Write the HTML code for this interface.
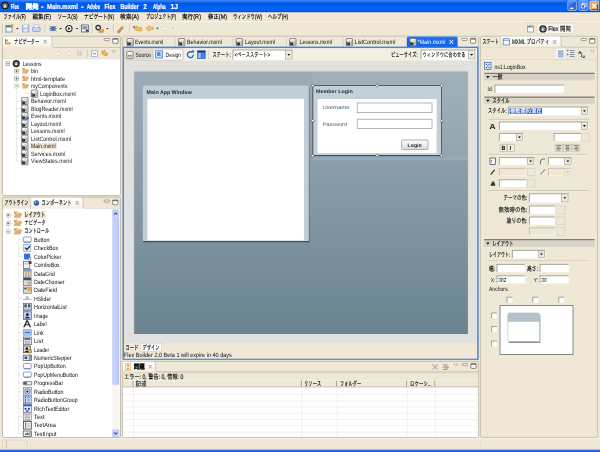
<!DOCTYPE html>
<html lang="ja"><head><meta charset="utf-8"><title>Flex 開発 - Main.mxml - Adobe Flex Builder 2 Alpha 1J</title>
<style>
html,body{margin:0;padding:0;background:#f0e8d7;overflow:hidden}
body{width:600px;height:452px;font-family:"Liberation Sans","IPAGothic","Noto Sans CJK JP",sans-serif;}
svg{display:block;position:absolute;left:0;top:0}
</style></head><body>
<svg width="600" height="452" viewBox="0 0 600 452" font-family='"Liberation Sans","IPAGothic","Noto Sans CJK JP",sans-serif' shape-rendering="auto" text-rendering="geometricPrecision">
<defs>
<filter id="soft" x="-2%" y="-2%" width="104%" height="104%" filterUnits="objectBoundingBox"><feGaussianBlur stdDeviation="0.38"/></filter>
<linearGradient id="gTitle" x1="0" y1="0" x2="0" y2="1">
<stop offset="0" stop-color="#3a8cff"/><stop offset="0.1" stop-color="#2478f8"/><stop offset="0.27" stop-color="#0458e6"/><stop offset="0.6" stop-color="#0460f0"/><stop offset="0.9" stop-color="#0466fa"/><stop offset="0.96" stop-color="#0448c8"/><stop offset="1" stop-color="#0440b8"/></linearGradient>
<linearGradient id="gCanvas" x1="0" y1="0" x2="0" y2="1">
<stop offset="0" stop-color="#9cadb7"/><stop offset="1" stop-color="#6a8391"/></linearGradient>
<linearGradient id="gBtn" x1="0" y1="0" x2="0" y2="1">
<stop offset="0" stop-color="#ffffff"/><stop offset="1" stop-color="#d9d9d9"/></linearGradient>
<linearGradient id="gTab" x1="0" y1="0" x2="0" y2="1">
<stop offset="0" stop-color="#2f7af2"/><stop offset="0.3" stop-color="#1868ec"/><stop offset="1" stop-color="#1262e6"/></linearGradient>
<linearGradient id="gVTab" x1="0" y1="0" x2="0" y2="1"><stop offset="0" stop-color="#ffffff"/><stop offset="0.55" stop-color="#fbf9f3"/><stop offset="1" stop-color="#f3ecdd"/></linearGradient>
<linearGradient id="gScroll" x1="0" y1="0" x2="1" y2="0">
<stop offset="0" stop-color="#c9d6fb"/><stop offset="1" stop-color="#b9c9f8"/></linearGradient>
</defs>
<g filter="url(#soft)">
<rect x="-6.00" y="-6.00" width="612.00" height="464.00" fill="#f0e8d7"/>
<rect x="-6.00" y="0.00" width="612.00" height="12.20" fill="url(#gTitle)"/>
<rect x="-6.00" y="-6.00" width="612.00" height="6.20" fill="#3a8cff"/>
<circle cx="5.00" cy="5.60" r="4.00" fill="#1e1e1e"/>
<circle cx="5.00" cy="5.60" r="2.70" fill="#6d6d6d"/>
<path d="M3.5,7.4 l1.5,-3.6 l1.5,3.6 z" fill="#e8e8e8"/>
<text stroke="#fff" stroke-width="0.2" x="10.80" y="8.69" font-size="7.2" fill="#ffffff" textLength="8.40" lengthAdjust="spacingAndGlyphs" font-weight="bold">Flex</text>
<text stroke="#fff" stroke-width="0.2" x="25.40" y="8.69" font-size="7.2" fill="#ffffff" textLength="13.20" lengthAdjust="spacingAndGlyphs" font-weight="bold">開発</text>
<text stroke="#fff" stroke-width="0.2" x="41.00" y="8.69" font-size="7.2" fill="#ffffff" textLength="2.60" lengthAdjust="spacingAndGlyphs" font-weight="bold">-</text>
<text stroke="#fff" stroke-width="0.2" x="47.00" y="8.69" font-size="7.2" fill="#ffffff" textLength="31.00" lengthAdjust="spacingAndGlyphs" font-weight="bold">Main.mxml</text>
<text stroke="#fff" stroke-width="0.2" x="81.00" y="8.69" font-size="7.2" fill="#ffffff" textLength="2.60" lengthAdjust="spacingAndGlyphs" font-weight="bold">-</text>
<text stroke="#fff" stroke-width="0.2" x="87.00" y="8.69" font-size="7.2" fill="#ffffff" textLength="13.00" lengthAdjust="spacingAndGlyphs" font-weight="bold">Adobe</text>
<text stroke="#fff" stroke-width="0.2" x="104.50" y="8.69" font-size="7.2" fill="#ffffff" textLength="11.00" lengthAdjust="spacingAndGlyphs" font-weight="bold">Flex</text>
<text stroke="#fff" stroke-width="0.2" x="120.50" y="8.69" font-size="7.2" fill="#ffffff" textLength="18.30" lengthAdjust="spacingAndGlyphs" font-weight="bold">Builder</text>
<text stroke="#fff" stroke-width="0.2" x="143.40" y="8.69" font-size="7.2" fill="#ffffff" textLength="3.20" lengthAdjust="spacingAndGlyphs" font-weight="bold">2</text>
<text stroke="#fff" stroke-width="0.2" x="153.00" y="8.69" font-size="7.2" fill="#ffffff" textLength="12.60" lengthAdjust="spacingAndGlyphs" font-weight="bold">Alpha</text>
<text stroke="#fff" stroke-width="0.2" x="170.40" y="8.69" font-size="7.2" fill="#ffffff" textLength="7.60" lengthAdjust="spacingAndGlyphs" font-weight="bold">1J</text>
<rect x="567.80" y="1.00" width="8.90" height="9.40" fill="#2c68e6" stroke="#cfdcf6" stroke-width="0.7" rx="1.6"/>
<path d="M568.4,6 v-3 q0,-1.6 1.6,-1.6 h5 z" fill="#7ea4f2" opacity="0.55"/>
<rect x="579.00" y="1.00" width="8.90" height="9.40" fill="#2c68e6" stroke="#cfdcf6" stroke-width="0.7" rx="1.6"/>
<path d="M579.6,6 v-3 q0,-1.6 1.6,-1.6 h5 z" fill="#7ea4f2" opacity="0.55"/>
<rect x="589.80" y="1.00" width="8.90" height="9.40" fill="#dfa066" stroke="#f3e3cf" stroke-width="0.7" rx="1.6"/>
<line x1="570.00" y1="8.30" x2="573.40" y2="8.30" stroke="#fff" stroke-width="1.3"/>
<rect x="582.60" y="3.20" width="3.60" height="3.20" fill="none" stroke="#fff" stroke-width="0.8"/>
<rect x="581.20" y="4.80" width="3.60" height="3.20" fill="#2c68e6" stroke="#fff" stroke-width="0.8"/>
<line x1="592.20" y1="3.80" x2="596.00" y2="8.00" stroke="#fff" stroke-width="1.3"/>
<line x1="596.00" y1="3.80" x2="592.20" y2="8.00" stroke="#fff" stroke-width="1.3"/>
<path d="M591.5,9.8 h6.2 v-5" fill="none" stroke="#3a2a1a" stroke-width="1.1" opacity="0.8"/>
<text x="3.40" y="18.69" font-size="6.73" fill="#000" textLength="22.40" lengthAdjust="spacingAndGlyphs" stroke="#000" stroke-width="0.14">ファイル(F)</text>
<text x="32.60" y="18.69" font-size="6.73" fill="#000" textLength="18.40" lengthAdjust="spacingAndGlyphs" stroke="#000" stroke-width="0.14">編集(E)</text>
<text x="57.40" y="18.69" font-size="6.73" fill="#000" textLength="20.20" lengthAdjust="spacingAndGlyphs" stroke="#000" stroke-width="0.14">ソース(S)</text>
<text x="84.00" y="18.69" font-size="6.73" fill="#000" textLength="30.00" lengthAdjust="spacingAndGlyphs" stroke="#000" stroke-width="0.14">ナビゲート(N)</text>
<text x="120.00" y="18.69" font-size="6.73" fill="#000" textLength="19.00" lengthAdjust="spacingAndGlyphs" stroke="#000" stroke-width="0.14">検索(A)</text>
<text x="146.00" y="18.69" font-size="6.73" fill="#000" textLength="30.00" lengthAdjust="spacingAndGlyphs" stroke="#000" stroke-width="0.14">プロジェクト(P)</text>
<text x="182.00" y="18.69" font-size="6.73" fill="#000" textLength="19.00" lengthAdjust="spacingAndGlyphs" stroke="#000" stroke-width="0.14">実行(R)</text>
<text x="208.00" y="18.69" font-size="6.73" fill="#000" textLength="19.00" lengthAdjust="spacingAndGlyphs" stroke="#000" stroke-width="0.14">修正(M)</text>
<text x="233.00" y="18.69" font-size="6.73" fill="#000" textLength="29.00" lengthAdjust="spacingAndGlyphs" stroke="#000" stroke-width="0.14">ウィンドウ(W)</text>
<text x="268.00" y="18.69" font-size="6.73" fill="#000" textLength="20.00" lengthAdjust="spacingAndGlyphs" stroke="#000" stroke-width="0.14">ヘルプ(H)</text>
<line x1="0.00" y1="20.70" x2="600.00" y2="20.70" stroke="#e2dbc7" stroke-width="0.6"/>
<line x1="0.00" y1="21.40" x2="600.00" y2="21.40" stroke="#ffffff" stroke-width="0.8" opacity="0.85"/>
<line x1="2.60" y1="24.00" x2="2.60" y2="33.00" stroke="#b9b5a4" stroke-width="0.8"/>
<line x1="3.40" y1="24.00" x2="3.40" y2="33.00" stroke="#fff" stroke-width="0.6"/>
<rect x="6.00" y="25.60" width="6.00" height="6.40" fill="#fbfbfb" stroke="#5a6f95" stroke-width="0.7"/>
<rect x="6.00" y="25.60" width="6.00" height="1.80" fill="#4f78c9"/>
<path d="M10.8,24 l1.2,0.9 l1.2,-0.9 l-0.4,1.4 l1,0.9 h-1.3 l-0.5,1.3 l-0.5,-1.3 h-1.3 l1,-0.9z" fill="#eeb040" stroke="#c88a28" stroke-width="0.3"/>
<path d="M16.2,28.0 h2.4 l-1.2,1.5 z" fill="#222"/>
<rect x="22.40" y="25.00" width="6.60" height="7.00" fill="#aec3e6" stroke="#8aa4d2" stroke-width="0.6"/>
<rect x="23.40" y="24.80" width="4.20" height="2.80" fill="#eef3fb"/>
<rect x="23.60" y="29.00" width="3.80" height="3.00" fill="#d7e1f3"/>
<rect x="32.60" y="27.20" width="7.60" height="4.40" fill="#c5d5ef" stroke="#7593c8" stroke-width="0.7" rx="0.8"/>
<rect x="34.00" y="24.80" width="4.80" height="2.60" fill="#fafcff" stroke="#8ba3d0" stroke-width="0.5"/>
<line x1="45.20" y1="24.00" x2="45.20" y2="33.00" stroke="#b5b19f" stroke-width="0.7"/>
<line x1="45.90" y1="24.00" x2="45.90" y2="33.00" stroke="#fff" stroke-width="0.6"/>
<circle cx="53.00" cy="28.60" r="2.70" fill="#6e8cb8"/>
<circle cx="53.00" cy="28.60" r="1.30" fill="#2c4064"/>
<line x1="53.00" y1="28.60" x2="49.60" y2="26.00" stroke="#5f7aa6" stroke-width="0.8"/>
<line x1="53.00" y1="28.60" x2="56.40" y2="26.00" stroke="#5f7aa6" stroke-width="0.8"/>
<line x1="53.00" y1="28.60" x2="49.20" y2="28.60" stroke="#5f7aa6" stroke-width="0.8"/>
<line x1="53.00" y1="28.60" x2="56.80" y2="28.60" stroke="#5f7aa6" stroke-width="0.8"/>
<line x1="53.00" y1="28.60" x2="49.60" y2="31.20" stroke="#5f7aa6" stroke-width="0.8"/>
<line x1="53.00" y1="28.60" x2="56.40" y2="31.20" stroke="#5f7aa6" stroke-width="0.8"/>
<path d="M59.4,28.0 h2.4 l-1.2,1.5 z" fill="#222"/>
<circle cx="69.00" cy="28.60" r="3.60" fill="#262626"/>
<circle cx="69.00" cy="28.60" r="2.50" fill="#fff"/>
<path d="M68.1,27 l2.5,1.6 l-2.5,1.6 z" fill="#262626"/>
<path d="M75.8,28.0 h2.4 l-1.2,1.5 z" fill="#222"/>
<rect x="81.40" y="25.00" width="7.20" height="7.00" fill="#f6f6f6" stroke="#4b4b4b" stroke-width="0.7"/>
<rect x="82.40" y="26.20" width="5.00" height="3.20" fill="#7f97c8"/>
<path d="M85,31.6 l2,-2.6 l2,2.6 z" fill="#333"/>
<line x1="92.40" y1="24.00" x2="92.40" y2="33.00" stroke="#b5b19f" stroke-width="0.7"/>
<line x1="93.10" y1="24.00" x2="93.10" y2="33.00" stroke="#fff" stroke-width="0.6"/>
<circle cx="98.20" cy="27.60" r="2.80" fill="#2a2a2a"/>
<circle cx="98.20" cy="27.60" r="1.60" fill="#d8d8d8"/>
<rect x="99.00" y="29.60" width="4.40" height="2.60" fill="#f0a030" stroke="#a96a18" stroke-width="0.4"/>
<path d="M106.2,28.0 h2.4 l-1.2,1.5 z" fill="#222"/>
<line x1="113.80" y1="24.00" x2="113.80" y2="33.00" stroke="#b5b19f" stroke-width="0.7"/>
<line x1="114.50" y1="24.00" x2="114.50" y2="33.00" stroke="#fff" stroke-width="0.6"/>
<path d="M117.2,32 l4.6,-5.6 l1.6,1.3 l-4.6,5.6 z" fill="#c98f50" stroke="#8d6232" stroke-width="0.4"/>
<path d="M121.8,26.4 l1.4,-1.8 l1.6,1.3 l-1.4,1.8z" fill="#f2d9a0"/>
<line x1="130.00" y1="24.00" x2="130.00" y2="33.00" stroke="#b5b19f" stroke-width="0.7"/>
<line x1="130.70" y1="24.00" x2="130.70" y2="33.00" stroke="#fff" stroke-width="0.6"/>
<path d="M134.2,28.4 l3,-2.6 v1.5 h3.2 q1.6,0 1.6,1.6 v1 q0,0.9 -1,0.9 h-3.8 v0.2 z" fill="#f2bf5c" stroke="#c08a2a" stroke-width="0.5"/>
<path d="M134,25.4 l0.5,1 l1,0.1 l-0.8,0.7 l0.2,1 l-0.9,-0.5 l-0.9,0.5 l0.2,-1 l-0.8,-0.7 l1,-0.1z" fill="#3a6ad0"/>
<path d="M146,28.4 l3.2,-2.7 v1.5 h4 v2.4 h-4 v1.5 z" fill="#f6c666" stroke="#c08a2a" stroke-width="0.5"/>
<path d="M156.20000000000002,27.799999999999997 h2.4 l-1.2,1.5 z" fill="#222"/>
<path d="M168.4,28.4 l-3.2,-2.7 v1.5 h-3.8 v2.4 h3.8 v1.5 z" fill="#f8f6ee" stroke="#d2cdb9" stroke-width="0.5"/>
<path d="M171.8,27.8 h2.4 l-1.2,1.5z" fill="#bdb9a8"/>
<rect x="527.60" y="26.00" width="5.80" height="6.00" fill="#fdfdfd" stroke="#7b7b7b" stroke-width="0.6"/>
<rect x="527.60" y="26.00" width="5.80" height="1.40" fill="#5578c4"/>
<path d="M532.2,24.6 l0.6,1.1 l1.2,0.2 l-0.9,0.8 l0.2,1.2 l-1.1,-0.6 l-1.1,0.6 l0.2,-1.2 l-0.9,-0.8 l1.2,-0.2z" fill="#e9a93f"/>
<rect x="537.00" y="23.20" width="37.00" height="10.40" fill="#f8f5ee" stroke="#d5cfbc" stroke-width="0.5" rx="1.2"/>
<line x1="525.00" y1="22.80" x2="575.00" y2="22.80" stroke="#d9d3c0" stroke-width="0.5"/>
<circle cx="543.00" cy="28.90" r="3.70" fill="#222"/>
<circle cx="543.00" cy="28.90" r="2.50" fill="#7a7a7a"/>
<path d="M541.7,30.6 l1.3,-3.3 l1.3,3.3z" fill="#e6e6e6"/>
<text x="548.20" y="30.99" font-size="6.73" fill="#111" textLength="22.80" lengthAdjust="spacingAndGlyphs" stroke="#111" stroke-width="0.14">Flex 開発</text>
<rect x="2.60" y="36.20" width="117.80" height="159.20" fill="#f0e8d7" stroke="#aca899" stroke-width="0.7" rx="1.2"/>
<path d="M3.0,47.5 V38.0 q0,-1.4 1.4,-1.4 H50.4 q1.6,0 1.6,1.6 V45.5 q0,2 2,2 z" fill="url(#gVTab)"/>
<path d="M50.4,36.6 q1.6,0 1.6,1.6 V45.5 q0,2 2,2 H120.0" fill="none" stroke="#aca899" stroke-width="0.55"/>
<rect x="5.20" y="39.60" width="2.80" height="2.00" fill="#e9a23c"/>
<rect x="7.20" y="42.40" width="3.40" height="2.20" fill="#e9a23c"/>
<line x1="5.60" y1="39.00" x2="5.60" y2="44.00" stroke="#4a6fb5" stroke-width="0.8"/>
<line x1="5.60" y1="43.60" x2="7.40" y2="43.60" stroke="#4a6fb5" stroke-width="0.7"/>
<text x="14.00" y="44.09" font-size="6.73" fill="#111" textLength="25.30" lengthAdjust="spacingAndGlyphs" stroke="#111" stroke-width="0.14">ナビゲーター</text>
<line x1="43.60" y1="39.80" x2="46.80" y2="43.60" stroke="#9b9b9b" stroke-width="0.6"/>
<line x1="46.80" y1="39.80" x2="43.60" y2="43.60" stroke="#9b9b9b" stroke-width="0.6"/>
<line x1="43.60" y1="40.60" x2="46.80" y2="40.60" stroke="#9b9b9b" stroke-width="0.5"/>
<line x1="43.60" y1="42.80" x2="46.80" y2="42.80" stroke="#9b9b9b" stroke-width="0.5"/>
<rect x="104.30" y="38.50" width="5.20" height="2.10" fill="#fff" stroke="#7d796b" stroke-width="0.7" rx="0.6"/>
<rect x="112.80" y="38.50" width="5.20" height="4.80" fill="#fff" stroke="#6f6b5e" stroke-width="0.8" rx="0.5"/>
<line x1="112.80" y1="39.10" x2="118.00" y2="39.10" stroke="#6f6b5e" stroke-width="1.1"/>
<path d="M55.4,53.4 l3,-2.6 v1.5 h3.2 v2.2 h-3.2 v1.5 z" fill="#faf8f2" stroke="#c2beb0" stroke-width="0.4"/>
<path d="M71.8,53.4 l-3,-2.6 v1.5 h-3.2 v2.2 h3.2 v1.5 z" fill="#faf8f2" stroke="#c2beb0" stroke-width="0.4"/>
<rect x="77.40" y="51.00" width="4.20" height="4.40" fill="#dddacb" stroke="#c9c5b3" stroke-width="0.4"/>
<path d="M80,52 l2.4,2 l-2.4,2z" fill="#d0ccbb"/>
<line x1="87.40" y1="49.60" x2="87.40" y2="57.40" stroke="#bdb9a8" stroke-width="0.6"/>
<rect x="91.60" y="50.80" width="5.80" height="5.80" fill="#fdfdfd" stroke="#86a0d4" stroke-width="0.7"/>
<line x1="93.00" y1="53.70" x2="96.00" y2="53.70" stroke="#4a6aa8" stroke-width="0.8"/>
<path d="M101.6,51.6 l3,-1.4 l1,2.2 l2.4,1 l-1.2,2.6 l-2.6,-0.8 l-1.6,-1.2 z" fill="#f0b24a" stroke="#c4862a" stroke-width="0.5"/>
<path d="M111.6,50.6 h4 l-2,2.4 z" fill="#f6f3ea" stroke="#9b9786" stroke-width="0.5"/>
<rect x="3.10" y="58.80" width="116.80" height="136.20" fill="#ffffff"/>
<line x1="3.10" y1="58.80" x2="119.90" y2="58.80" stroke="#d9d5c4" stroke-width="0.5"/>
<line x1="16.6" y1="66" x2="16.6" y2="161.4" stroke="#b5b5b5" stroke-width="0.5" stroke-dasharray="0.5,0.5"/>
<rect x="5.90" y="61.80" width="3.80" height="3.80" fill="#fff" stroke="#8a8a8a" stroke-width="0.6"/>
<line x1="6.70" y1="63.70" x2="8.90" y2="63.70" stroke="#333" stroke-width="0.6"/>
<circle cx="16.20" cy="63.60" r="3.60" fill="#2a2a2a"/>
<circle cx="16.20" cy="63.60" r="2.20" fill="#777"/>
<path d="M14.8,65 l1.4,-3.2 l1.4,3.2 z" fill="#ddd"/>
<text x="22.70" y="65.83" font-size="6.2" fill="#1a1a1a" textLength="18.90" lengthAdjust="spacingAndGlyphs">Lessons</text>
<line x1="18.6" y1="71.1" x2="22" y2="71.1" stroke="#b5b5b5" stroke-width="0.5" stroke-dasharray="0.5,0.5"/>
<rect x="14.70" y="69.20" width="3.80" height="3.80" fill="#fff" stroke="#9a9a9a" stroke-width="0.6"/>
<line x1="15.50" y1="71.10" x2="17.70" y2="71.10" stroke="#333" stroke-width="0.6"/>
<line x1="16.60" y1="70.00" x2="16.60" y2="72.20" stroke="#333" stroke-width="0.6"/>
<path d="M22.2,68.3 h2.5 l0.8,0.9 h2.7 v1.4 h-6z" fill="#d9a166"/>
<path d="M21.9,73.5 l1.5,-3.5 h5.7 l-1.7,3.5z" fill="#e4ad74"/>
<line x1="23.90" y1="69.70" x2="26.60" y2="69.70" stroke="#fbe9cf" stroke-width="0.6"/>
<text x="31.00" y="73.33" font-size="6.2" fill="#1a1a1a" textLength="7.00" lengthAdjust="spacingAndGlyphs">bin</text>
<line x1="18.6" y1="78.6" x2="22" y2="78.6" stroke="#b5b5b5" stroke-width="0.5" stroke-dasharray="0.5,0.5"/>
<rect x="14.70" y="76.70" width="3.80" height="3.80" fill="#fff" stroke="#9a9a9a" stroke-width="0.6"/>
<line x1="15.50" y1="78.60" x2="17.70" y2="78.60" stroke="#333" stroke-width="0.6"/>
<line x1="16.60" y1="77.50" x2="16.60" y2="79.70" stroke="#333" stroke-width="0.6"/>
<path d="M22.2,75.8 h2.5 l0.8,0.9 h2.7 v1.4 h-6z" fill="#d9a166"/>
<path d="M21.9,81.0 l1.5,-3.5 h5.7 l-1.7,3.5z" fill="#e4ad74"/>
<line x1="23.90" y1="77.20" x2="26.60" y2="77.20" stroke="#fbe9cf" stroke-width="0.6"/>
<text x="31.00" y="80.83" font-size="6.2" fill="#1a1a1a" textLength="34.00" lengthAdjust="spacingAndGlyphs">html-template</text>
<line x1="18.6" y1="86.1" x2="22" y2="86.1" stroke="#b5b5b5" stroke-width="0.5" stroke-dasharray="0.5,0.5"/>
<rect x="14.70" y="84.20" width="3.80" height="3.80" fill="#fff" stroke="#c2c2c2" stroke-width="0.6"/>
<line x1="15.50" y1="86.10" x2="17.70" y2="86.10" stroke="#333" stroke-width="0.6"/>
<path d="M22.2,83.3 h2.5 l0.8,0.9 h2.7 v1.4 h-6z" fill="#d9a166"/>
<path d="M21.9,88.5 l1.5,-3.5 h5.7 l-1.7,3.5z" fill="#e4ad74"/>
<line x1="23.90" y1="84.70" x2="26.60" y2="84.70" stroke="#fbe9cf" stroke-width="0.6"/>
<text x="31.00" y="88.33" font-size="6.2" fill="#1a1a1a" textLength="36.30" lengthAdjust="spacingAndGlyphs">myComponents</text>
<line x1="25.6" y1="89.6" x2="25.6" y2="93.4" stroke="#b5b5b5" stroke-width="0.5" stroke-dasharray="0.5,0.5"/>
<line x1="25.6" y1="93.4" x2="31" y2="93.4" stroke="#b5b5b5" stroke-width="0.5" stroke-dasharray="0.5,0.5"/>
<rect x="31.30" y="90.00" width="6.40" height="7.20" fill="#f1f1f1" stroke="#4f4f4f" stroke-width="0.65" rx="0.6"/>
<rect x="31.60" y="93.00" width="0.90" height="3.90" fill="#3a3a3a"/>
<rect x="32.40" y="93.80" width="2.70" height="2.80" fill="#333333"/>
<rect x="35.40" y="92.00" width="1.80" height="4.50" fill="#b0b0b0"/>
<rect x="33.00" y="90.80" width="3.10" height="2.00" fill="#ffffff"/>
<line x1="32.90" y1="93.30" x2="35.70" y2="91.40" stroke="#777" stroke-width="0.45"/>
<text x="40.00" y="95.63" font-size="6.2" fill="#1a1a1a" textLength="35.70" lengthAdjust="spacingAndGlyphs">LoginBox.mxml</text>
<line x1="16.6" y1="101" x2="21" y2="101" stroke="#b5b5b5" stroke-width="0.5" stroke-dasharray="0.5,0.5"/>
<rect x="21.60" y="97.60" width="6.40" height="7.20" fill="#f1f1f1" stroke="#4f4f4f" stroke-width="0.65" rx="0.6"/>
<rect x="21.90" y="100.60" width="0.90" height="3.90" fill="#3a3a3a"/>
<rect x="22.70" y="101.40" width="2.70" height="2.80" fill="#333333"/>
<rect x="25.70" y="99.60" width="1.80" height="4.50" fill="#b0b0b0"/>
<rect x="23.30" y="98.40" width="3.10" height="2.00" fill="#ffffff"/>
<line x1="23.20" y1="100.90" x2="26.00" y2="99.00" stroke="#777" stroke-width="0.45"/>
<text x="31.00" y="103.23" font-size="6.2" fill="#1a1a1a" textLength="35.00" lengthAdjust="spacingAndGlyphs">Behavior.mxml</text>
<line x1="16.6" y1="108.5" x2="21" y2="108.5" stroke="#b5b5b5" stroke-width="0.5" stroke-dasharray="0.5,0.5"/>
<rect x="21.60" y="105.10" width="6.40" height="7.20" fill="#f1f1f1" stroke="#4f4f4f" stroke-width="0.65" rx="0.6"/>
<rect x="21.90" y="108.10" width="0.90" height="3.90" fill="#3a3a3a"/>
<rect x="22.70" y="108.90" width="2.70" height="2.80" fill="#333333"/>
<rect x="25.70" y="107.10" width="1.80" height="4.50" fill="#b0b0b0"/>
<rect x="23.30" y="105.90" width="3.10" height="2.00" fill="#ffffff"/>
<line x1="23.20" y1="108.40" x2="26.00" y2="106.50" stroke="#777" stroke-width="0.45"/>
<text x="31.00" y="110.73" font-size="6.2" fill="#1a1a1a" textLength="41.60" lengthAdjust="spacingAndGlyphs">BlogReader.mxml</text>
<line x1="16.6" y1="116.0" x2="21" y2="116.0" stroke="#b5b5b5" stroke-width="0.5" stroke-dasharray="0.5,0.5"/>
<rect x="21.60" y="112.60" width="6.40" height="7.20" fill="#f1f1f1" stroke="#4f4f4f" stroke-width="0.65" rx="0.6"/>
<rect x="21.90" y="115.60" width="0.90" height="3.90" fill="#3a3a3a"/>
<rect x="22.70" y="116.40" width="2.70" height="2.80" fill="#333333"/>
<rect x="25.70" y="114.60" width="1.80" height="4.50" fill="#b0b0b0"/>
<rect x="23.30" y="113.40" width="3.10" height="2.00" fill="#ffffff"/>
<line x1="23.20" y1="115.90" x2="26.00" y2="114.00" stroke="#777" stroke-width="0.45"/>
<text x="31.00" y="118.23" font-size="6.2" fill="#1a1a1a" textLength="30.20" lengthAdjust="spacingAndGlyphs">Events.mxml</text>
<line x1="16.6" y1="123.5" x2="21" y2="123.5" stroke="#b5b5b5" stroke-width="0.5" stroke-dasharray="0.5,0.5"/>
<rect x="21.60" y="120.10" width="6.40" height="7.20" fill="#f1f1f1" stroke="#4f4f4f" stroke-width="0.65" rx="0.6"/>
<rect x="21.90" y="123.10" width="0.90" height="3.90" fill="#3a3a3a"/>
<rect x="22.70" y="123.90" width="2.70" height="2.80" fill="#333333"/>
<rect x="25.70" y="122.10" width="1.80" height="4.50" fill="#b0b0b0"/>
<rect x="23.30" y="120.90" width="3.10" height="2.00" fill="#ffffff"/>
<line x1="23.20" y1="123.40" x2="26.00" y2="121.50" stroke="#777" stroke-width="0.45"/>
<text x="31.00" y="125.73" font-size="6.2" fill="#1a1a1a" textLength="30.00" lengthAdjust="spacingAndGlyphs">Layout.mxml</text>
<line x1="16.6" y1="131.0" x2="21" y2="131.0" stroke="#b5b5b5" stroke-width="0.5" stroke-dasharray="0.5,0.5"/>
<rect x="21.60" y="127.60" width="6.40" height="7.20" fill="#f1f1f1" stroke="#4f4f4f" stroke-width="0.65" rx="0.6"/>
<rect x="21.90" y="130.60" width="0.90" height="3.90" fill="#3a3a3a"/>
<rect x="22.70" y="131.40" width="2.70" height="2.80" fill="#333333"/>
<rect x="25.70" y="129.60" width="1.80" height="4.50" fill="#b0b0b0"/>
<rect x="23.30" y="128.40" width="3.10" height="2.00" fill="#ffffff"/>
<line x1="23.20" y1="130.90" x2="26.00" y2="129.00" stroke="#777" stroke-width="0.45"/>
<text x="31.00" y="133.23" font-size="6.2" fill="#1a1a1a" textLength="33.60" lengthAdjust="spacingAndGlyphs">Lessons.mxml</text>
<line x1="16.6" y1="138.5" x2="21" y2="138.5" stroke="#b5b5b5" stroke-width="0.5" stroke-dasharray="0.5,0.5"/>
<rect x="21.60" y="135.10" width="6.40" height="7.20" fill="#f1f1f1" stroke="#4f4f4f" stroke-width="0.65" rx="0.6"/>
<rect x="21.90" y="138.10" width="0.90" height="3.90" fill="#3a3a3a"/>
<rect x="22.70" y="138.90" width="2.70" height="2.80" fill="#333333"/>
<rect x="25.70" y="137.10" width="1.80" height="4.50" fill="#b0b0b0"/>
<rect x="23.30" y="135.90" width="3.10" height="2.00" fill="#ffffff"/>
<line x1="23.20" y1="138.40" x2="26.00" y2="136.50" stroke="#777" stroke-width="0.45"/>
<text x="31.00" y="140.73" font-size="6.2" fill="#1a1a1a" textLength="40.20" lengthAdjust="spacingAndGlyphs">ListControl.mxml</text>
<line x1="16.6" y1="146.0" x2="21" y2="146.0" stroke="#b5b5b5" stroke-width="0.5" stroke-dasharray="0.5,0.5"/>
<rect x="30.20" y="142.70" width="26.80" height="6.80" fill="#f0e8d7"/>
<rect x="21.60" y="142.60" width="6.40" height="7.20" fill="#f1f1f1" stroke="#4f4f4f" stroke-width="0.65" rx="0.6"/>
<rect x="21.90" y="145.60" width="0.90" height="3.90" fill="#3a3a3a"/>
<rect x="22.70" y="146.40" width="2.70" height="2.80" fill="#333333"/>
<rect x="25.70" y="144.60" width="1.80" height="4.50" fill="#b0b0b0"/>
<rect x="23.30" y="143.40" width="3.10" height="2.00" fill="#ffffff"/>
<line x1="23.20" y1="145.90" x2="26.00" y2="144.00" stroke="#777" stroke-width="0.45"/>
<text x="31.00" y="148.23" font-size="6.2" fill="#1a1a1a" textLength="24.60" lengthAdjust="spacingAndGlyphs">Main.mxml</text>
<line x1="16.6" y1="153.5" x2="21" y2="153.5" stroke="#b5b5b5" stroke-width="0.5" stroke-dasharray="0.5,0.5"/>
<rect x="21.60" y="150.10" width="6.40" height="7.20" fill="#f1f1f1" stroke="#4f4f4f" stroke-width="0.65" rx="0.6"/>
<rect x="21.90" y="153.10" width="0.90" height="3.90" fill="#3a3a3a"/>
<rect x="22.70" y="153.90" width="2.70" height="2.80" fill="#333333"/>
<rect x="25.70" y="152.10" width="1.80" height="4.50" fill="#b0b0b0"/>
<rect x="23.30" y="150.90" width="3.10" height="2.00" fill="#ffffff"/>
<line x1="23.20" y1="153.40" x2="26.00" y2="151.50" stroke="#777" stroke-width="0.45"/>
<text x="31.00" y="155.73" font-size="6.2" fill="#1a1a1a" textLength="34.40" lengthAdjust="spacingAndGlyphs">Services.mxml</text>
<line x1="16.6" y1="161.0" x2="21" y2="161.0" stroke="#b5b5b5" stroke-width="0.5" stroke-dasharray="0.5,0.5"/>
<rect x="21.60" y="157.60" width="6.40" height="7.20" fill="#f1f1f1" stroke="#4f4f4f" stroke-width="0.65" rx="0.6"/>
<rect x="21.90" y="160.60" width="0.90" height="3.90" fill="#3a3a3a"/>
<rect x="22.70" y="161.40" width="2.70" height="2.80" fill="#333333"/>
<rect x="25.70" y="159.60" width="1.80" height="4.50" fill="#b0b0b0"/>
<rect x="23.30" y="158.40" width="3.10" height="2.00" fill="#ffffff"/>
<line x1="23.20" y1="160.90" x2="26.00" y2="159.00" stroke="#777" stroke-width="0.45"/>
<text x="31.00" y="163.23" font-size="6.2" fill="#1a1a1a" textLength="41.00" lengthAdjust="spacingAndGlyphs">ViewStates.mxml</text>
<rect x="26.30" y="117.20" width="2.50" height="2.00" fill="#1f5fe0"/>
<rect x="2.60" y="197.20" width="117.80" height="240.20" fill="#f0e8d7" stroke="#aca899" stroke-width="0.7" rx="1.2"/>
<text x="4.60" y="205.29" font-size="6.73" fill="#111" textLength="24.00" lengthAdjust="spacingAndGlyphs" stroke="#111" stroke-width="0.14">アウトライン</text>
<path d="M30.6,208.6 V199.20000000000002 q0,-1.4 1.4,-1.4 H81.4 q1.6,0 1.6,1.6 V206.6 q0,2 2,2 z" fill="url(#gVTab)"/>
<path d="M81.4,197.8 q1.6,0 1.6,1.6 V206.6 q0,2 2,2 H120.0" fill="none" stroke="#aca899" stroke-width="0.55"/>
<line x1="30.60" y1="198.80" x2="30.60" y2="208.60" stroke="#aca899" stroke-width="0.5"/>
<circle cx="36.40" cy="203.00" r="2.70" fill="#3b5fa8"/>
<circle cx="35.60" cy="202.20" r="1.00" fill="#9bb6e6"/>
<text x="41.40" y="205.29" font-size="6.73" fill="#111" textLength="30.20" lengthAdjust="spacingAndGlyphs" stroke="#111" stroke-width="0.14">コンポーネント</text>
<line x1="75.60" y1="201.00" x2="78.80" y2="204.80" stroke="#9b9b9b" stroke-width="0.6"/>
<line x1="78.80" y1="201.00" x2="75.60" y2="204.80" stroke="#9b9b9b" stroke-width="0.6"/>
<line x1="75.60" y1="201.80" x2="78.80" y2="201.80" stroke="#9b9b9b" stroke-width="0.5"/>
<line x1="75.60" y1="204.00" x2="78.80" y2="204.00" stroke="#9b9b9b" stroke-width="0.5"/>
<rect x="104.20" y="200.00" width="5.20" height="2.10" fill="#fff" stroke="#7d796b" stroke-width="0.7" rx="0.6"/>
<rect x="112.70" y="200.00" width="5.20" height="4.80" fill="#fff" stroke="#6f6b5e" stroke-width="0.8" rx="0.5"/>
<line x1="112.70" y1="200.60" x2="117.90" y2="200.60" stroke="#6f6b5e" stroke-width="1.1"/>
<rect x="3.10" y="208.60" width="116.80" height="228.40" fill="#ffffff"/>
<rect x="112.20" y="208.80" width="7.00" height="228.20" fill="#f7f6f3"/>
<rect x="112.40" y="218.00" width="6.60" height="166.60" fill="url(#gScroll)" stroke="#b5c6f4" stroke-width="0.4" rx="0.8"/>
<rect x="112.40" y="209.80" width="6.60" height="7.80" fill="#c6d4fb" stroke="#aebff2" stroke-width="0.4" rx="1"/>
<path d="M114,214.6 l1.7,-1.9 l1.7,1.9" fill="none" stroke="#3d568c" stroke-width="1.1"/>
<rect x="112.40" y="429.80" width="6.60" height="7.20" fill="#c6d4fb" stroke="#aebff2" stroke-width="0.4" rx="1"/>
<path d="M114,432.4 l1.7,1.9 l1.7,-1.9" fill="none" stroke="#3d568c" stroke-width="1.1"/>
<line x1="8.2" y1="217" x2="8.2" y2="231" stroke="#b5b5b5" stroke-width="0.5" stroke-dasharray="0.5,0.5"/>
<rect x="23.60" y="211.00" width="22.40" height="7.40" fill="#f0e8d7"/>
<rect x="6.30" y="213.30" width="3.80" height="3.80" fill="#fff" stroke="#b8b8b8" stroke-width="0.6"/>
<line x1="7.10" y1="215.20" x2="9.30" y2="215.20" stroke="#333" stroke-width="0.6"/>
<line x1="8.20" y1="214.10" x2="8.20" y2="216.30" stroke="#333" stroke-width="0.6"/>
<line x1="10.2" y1="215.2" x2="14" y2="215.2" stroke="#b5b5b5" stroke-width="0.5" stroke-dasharray="0.5,0.5"/>
<g transform="translate(13.8,211.00) scale(1.2) translate(-13.8,-211.00)">
<path d="M14.0,211.5 h2.5 l0.8,0.9 h2.7 v1.4 h-6z" fill="#d9a166"/>
<path d="M13.700000000000001,216.7 l1.5,-3.5 h5.7 l-1.7,3.5z" fill="#e4ad74"/>
<line x1="15.70" y1="212.90" x2="18.40" y2="212.90" stroke="#fbe9cf" stroke-width="0.6"/>
</g>
<text x="24.60" y="216.89" font-size="6.73" fill="#111" textLength="20.40" lengthAdjust="spacingAndGlyphs" stroke="#111" stroke-width="0.14">レイアウト</text>
<rect x="6.30" y="221.50" width="3.80" height="3.80" fill="#fff" stroke="#b8b8b8" stroke-width="0.6"/>
<line x1="7.10" y1="223.40" x2="9.30" y2="223.40" stroke="#333" stroke-width="0.6"/>
<line x1="8.20" y1="222.30" x2="8.20" y2="224.50" stroke="#333" stroke-width="0.6"/>
<line x1="10.2" y1="223.4" x2="14" y2="223.4" stroke="#b5b5b5" stroke-width="0.5" stroke-dasharray="0.5,0.5"/>
<g transform="translate(13.8,219.20) scale(1.2) translate(-13.8,-219.20)">
<path d="M14.0,219.70000000000002 h2.5 l0.8,0.9 h2.7 v1.4 h-6z" fill="#d9a166"/>
<path d="M13.700000000000001,224.9 l1.5,-3.5 h5.7 l-1.7,3.5z" fill="#e4ad74"/>
<line x1="15.70" y1="221.10" x2="18.40" y2="221.10" stroke="#fbe9cf" stroke-width="0.6"/>
</g>
<text x="24.60" y="225.09" font-size="6.73" fill="#111" textLength="21.00" lengthAdjust="spacingAndGlyphs" stroke="#111" stroke-width="0.14">ナビゲータ</text>
<rect x="6.30" y="229.90" width="3.80" height="3.80" fill="#fff" stroke="#b8b8b8" stroke-width="0.6"/>
<line x1="7.10" y1="231.80" x2="9.30" y2="231.80" stroke="#333" stroke-width="0.6"/>
<line x1="10.2" y1="231.79999999999998" x2="14" y2="231.79999999999998" stroke="#b5b5b5" stroke-width="0.5" stroke-dasharray="0.5,0.5"/>
<g transform="translate(13.8,227.60) scale(1.2) translate(-13.8,-227.60)">
<path d="M14.0,228.1 h2.5 l0.8,0.9 h2.7 v1.4 h-6z" fill="#d9a166"/>
<path d="M13.700000000000001,233.29999999999998 l1.5,-3.5 h5.7 l-1.7,3.5z" fill="#e4ad74"/>
<line x1="15.70" y1="229.50" x2="18.40" y2="229.50" stroke="#fbe9cf" stroke-width="0.6"/>
</g>
<text x="24.60" y="233.49" font-size="6.73" fill="#111" textLength="24.40" lengthAdjust="spacingAndGlyphs" stroke="#111" stroke-width="0.14">コントロール</text>
<line x1="18.8" y1="235" x2="18.8" y2="434" stroke="#b5b5b5" stroke-width="0.5" stroke-dasharray="0.5,0.5"/>
<line x1="18.8" y1="239.6" x2="23" y2="239.6" stroke="#b5b5b5" stroke-width="0.5" stroke-dasharray="0.5,0.5"/>
<g transform="translate(23.4,235.80) scale(1.13) translate(-23.4,-235.80)">
<rect x="23.40" y="236.80" width="7.00" height="4.60" fill="#f7f9fd" stroke="#6f86b4" stroke-width="0.65" rx="1"/>
<line x1="24.00" y1="241.50" x2="29.80" y2="241.50" stroke="#4a5f8c" stroke-width="0.5"/>
</g>
<text x="34.00" y="241.83" font-size="6.2" fill="#111" textLength="15.60" lengthAdjust="spacingAndGlyphs">Button</text>
<line x1="18.8" y1="248.0375" x2="23" y2="248.0375" stroke="#b5b5b5" stroke-width="0.5" stroke-dasharray="0.5,0.5"/>
<g transform="translate(23.4,244.24) scale(1.13) translate(-23.4,-244.24)">
<rect x="23.70" y="244.44" width="6.20" height="6.20" fill="#e2ecfc" stroke="#7f9ad0" stroke-width="0.6"/>
<path d="M24.799999999999997,247.23749999999998 l1.7,1.8 l2.6,-3.2" fill="none" stroke="#1b1b1b" stroke-width="1.1"/>
</g>
<text x="34.00" y="250.27" font-size="6.2" fill="#111" textLength="24.20" lengthAdjust="spacingAndGlyphs">CheckBox</text>
<line x1="18.8" y1="256.475" x2="23" y2="256.475" stroke="#b5b5b5" stroke-width="0.5" stroke-dasharray="0.5,0.5"/>
<g transform="translate(23.4,252.68) scale(1.13) translate(-23.4,-252.68)">
<rect x="24.00" y="253.48" width="5.40" height="5.20" fill="#2f6ee6"/>
<rect x="27.80" y="256.88" width="2.20" height="2.20" fill="#f5f5f5" stroke="#555" stroke-width="0.4"/>
</g>
<text x="34.00" y="258.71" font-size="6.2" fill="#111" textLength="27.20" lengthAdjust="spacingAndGlyphs">ColorPicker</text>
<line x1="18.8" y1="264.9125" x2="23" y2="264.9125" stroke="#b5b5b5" stroke-width="0.5" stroke-dasharray="0.5,0.5"/>
<g transform="translate(23.4,261.11) scale(1.13) translate(-23.4,-261.11)">
<rect x="23.40" y="261.51" width="5.60" height="6.20" fill="#f3f3f3" stroke="#555" stroke-width="0.6"/>
<rect x="28.00" y="261.11" width="2.60" height="2.60" fill="#444"/>
<line x1="24.40" y1="263.51" x2="27.40" y2="263.51" stroke="#777" stroke-width="0.5"/>
</g>
<text x="34.00" y="267.14" font-size="6.2" fill="#111" textLength="25.60" lengthAdjust="spacingAndGlyphs">ComboBox</text>
<line x1="18.8" y1="273.35" x2="23" y2="273.35" stroke="#b5b5b5" stroke-width="0.5" stroke-dasharray="0.5,0.5"/>
<g transform="translate(23.4,269.55) scale(1.13) translate(-23.4,-269.55)">
<rect x="23.40" y="269.55" width="6.80" height="6.80" fill="#e8d7b8" stroke="#6a6a6a" stroke-width="0.6"/>
<line x1="25.70" y1="269.55" x2="25.70" y2="276.35" stroke="#6a6a6a" stroke-width="0.5"/>
<line x1="28.00" y1="269.55" x2="28.00" y2="276.35" stroke="#6a6a6a" stroke-width="0.5"/>
<rect x="23.40" y="269.55" width="6.80" height="1.80" fill="#8aa0c8"/>
</g>
<text x="34.00" y="275.58" font-size="6.2" fill="#111" textLength="21.00" lengthAdjust="spacingAndGlyphs">DataGrid</text>
<line x1="18.8" y1="281.7875" x2="23" y2="281.7875" stroke="#b5b5b5" stroke-width="0.5" stroke-dasharray="0.5,0.5"/>
<g transform="translate(23.4,277.99) scale(1.13) translate(-23.4,-277.99)">
<rect x="23.40" y="277.99" width="6.80" height="6.80" fill="#ddd" stroke="#666" stroke-width="0.6"/>
<rect x="23.40" y="277.99" width="6.80" height="2.00" fill="#34507f"/>
<rect x="27.00" y="281.19" width="2.40" height="2.40" fill="#e8a33a"/>
</g>
<text x="34.00" y="284.02" font-size="6.2" fill="#111" textLength="30.60" lengthAdjust="spacingAndGlyphs">DateChooser</text>
<line x1="18.8" y1="290.225" x2="23" y2="290.225" stroke="#b5b5b5" stroke-width="0.5" stroke-dasharray="0.5,0.5"/>
<g transform="translate(23.4,286.43) scale(1.13) translate(-23.4,-286.43)">
<rect x="23.40" y="287.03" width="7.00" height="5.40" fill="#d8dce6" stroke="#5a6a8a" stroke-width="0.6"/>
<rect x="27.20" y="287.82" width="2.60" height="2.80" fill="#e8a33a"/>
<rect x="24.00" y="287.82" width="2.40" height="1.20" fill="#466"/>
</g>
<text x="34.00" y="292.46" font-size="6.2" fill="#111" textLength="23.00" lengthAdjust="spacingAndGlyphs">DateField</text>
<line x1="18.8" y1="298.6625" x2="23" y2="298.6625" stroke="#b5b5b5" stroke-width="0.5" stroke-dasharray="0.5,0.5"/>
<g transform="translate(23.4,294.86) scale(1.13) translate(-23.4,-294.86)">
<line x1="23.00" y1="298.86" x2="30.80" y2="298.86" stroke="#999" stroke-width="0.6"/>
<path d="M25.799999999999997,296.46250000000003 h2 v1.6 l-1,1 l-1,-1z" fill="#ccc" stroke="#888" stroke-width="0.4"/>
</g>
<text x="34.00" y="300.89" font-size="6.2" fill="#111" textLength="17.00" lengthAdjust="spacingAndGlyphs">HSlider</text>
<line x1="18.8" y1="307.1" x2="23" y2="307.1" stroke="#b5b5b5" stroke-width="0.5" stroke-dasharray="0.5,0.5"/>
<g transform="translate(23.4,303.30) scale(1.13) translate(-23.4,-303.30)">
<rect x="23.40" y="303.30" width="7.00" height="6.60" fill="#e6e6e6" stroke="#555" stroke-width="0.6"/>
<rect x="24.20" y="304.20" width="2.20" height="2.70" fill="#34507f"/>
<rect x="27.40" y="304.20" width="2.20" height="2.70" fill="#34507f"/>
<line x1="24.00" y1="308.50" x2="29.80" y2="308.50" stroke="#777" stroke-width="0.7"/>
</g>
<text x="34.00" y="309.33" font-size="6.2" fill="#111" textLength="32.80" lengthAdjust="spacingAndGlyphs">HorizontalList</text>
<line x1="18.8" y1="315.5375" x2="23" y2="315.5375" stroke="#b5b5b5" stroke-width="0.5" stroke-dasharray="0.5,0.5"/>
<g transform="translate(23.4,311.74) scale(1.13) translate(-23.4,-311.74)">
<rect x="23.40" y="311.74" width="7.00" height="6.80" fill="#bcd3f7" stroke="#3f6fd0" stroke-width="0.7"/>
<circle cx="26.90" cy="314.34" r="1.30" fill="#2b2b2b"/>
<path d="M24.4,317.7375 q2.5,-3.4 5,0z" fill="#2b2b2b"/>
</g>
<text x="34.00" y="317.77" font-size="6.2" fill="#111" textLength="14.00" lengthAdjust="spacingAndGlyphs">Image</text>
<line x1="18.8" y1="323.975" x2="23" y2="323.975" stroke="#b5b5b5" stroke-width="0.5" stroke-dasharray="0.5,0.5"/>
<g transform="translate(23.4,320.18) scale(1.13) translate(-23.4,-320.18)">
<text stroke="#111" stroke-width="0.25" x="23.60" y="326.60" font-size="8.4" fill="#111" textLength="6.40" lengthAdjust="spacingAndGlyphs">A</text>
</g>
<text x="34.00" y="326.21" font-size="6.2" fill="#111" textLength="12.60" lengthAdjust="spacingAndGlyphs">Label</text>
<line x1="18.8" y1="332.4125" x2="23" y2="332.4125" stroke="#b5b5b5" stroke-width="0.5" stroke-dasharray="0.5,0.5"/>
<g transform="translate(23.4,328.61) scale(1.13) translate(-23.4,-328.61)">
<rect x="23.40" y="329.61" width="7.00" height="4.80" fill="#a9c6f5" stroke="#5d83c8" stroke-width="0.5"/>
<line x1="24.60" y1="332.01" x2="29.20" y2="332.01" stroke="#2f55a8" stroke-width="0.8"/>
</g>
<text x="34.00" y="334.64" font-size="6.2" fill="#111" textLength="9.80" lengthAdjust="spacingAndGlyphs">Link</text>
<line x1="18.8" y1="340.85" x2="23" y2="340.85" stroke="#b5b5b5" stroke-width="0.5" stroke-dasharray="0.5,0.5"/>
<g transform="translate(23.4,337.05) scale(1.13) translate(-23.4,-337.05)">
<rect x="23.40" y="337.05" width="7.00" height="6.80" fill="#eef0f4" stroke="#555" stroke-width="0.6"/>
<rect x="24.20" y="338.05" width="5.40" height="1.40" fill="#34507f"/>
<line x1="24.40" y1="340.85" x2="29.40" y2="340.85" stroke="#777" stroke-width="0.6"/>
<line x1="24.40" y1="342.35" x2="29.40" y2="342.35" stroke="#777" stroke-width="0.6"/>
</g>
<text x="34.00" y="343.08" font-size="6.2" fill="#111" textLength="9.00" lengthAdjust="spacingAndGlyphs">List</text>
<line x1="18.8" y1="349.2875" x2="23" y2="349.2875" stroke="#b5b5b5" stroke-width="0.5" stroke-dasharray="0.5,0.5"/>
<g transform="translate(23.4,345.49) scale(1.13) translate(-23.4,-345.49)">
<rect x="23.40" y="345.89" width="6.20" height="6.00" fill="#d9d9d9" stroke="#444" stroke-width="0.6"/>
<circle cx="26.40" cy="348.29" r="1.20" fill="#222"/>
<path d="M24.2,351.4875 q2.2,-3 4.4,0z" fill="#222"/>
<rect x="28.00" y="349.29" width="2.80" height="2.80" fill="#e0b050" stroke="#86601c" stroke-width="0.4"/>
</g>
<text x="34.00" y="351.52" font-size="6.2" fill="#111" textLength="15.20" lengthAdjust="spacingAndGlyphs">Loader</text>
<line x1="18.8" y1="357.725" x2="23" y2="357.725" stroke="#b5b5b5" stroke-width="0.5" stroke-dasharray="0.5,0.5"/>
<g transform="translate(23.4,353.93) scale(1.13) translate(-23.4,-353.93)">
<rect x="23.20" y="354.93" width="7.40" height="4.80" fill="#e9edf5" stroke="#555" stroke-width="0.6"/>
<rect x="24.40" y="356.12" width="2.40" height="2.40" fill="#34507f"/>
<rect x="28.40" y="354.93" width="2.20" height="4.80" fill="#9aa9c6" stroke="#555" stroke-width="0.4"/>
</g>
<text x="34.00" y="359.96" font-size="6.2" fill="#111" textLength="37.60" lengthAdjust="spacingAndGlyphs">NumericStepper</text>
<line x1="18.8" y1="366.1625" x2="23" y2="366.1625" stroke="#b5b5b5" stroke-width="0.5" stroke-dasharray="0.5,0.5"/>
<g transform="translate(23.4,362.36) scale(1.13) translate(-23.4,-362.36)">
<rect x="23.40" y="363.36" width="7.00" height="4.60" fill="#f7f9fd" stroke="#6f86b4" stroke-width="0.65" rx="1"/>
<line x1="24.00" y1="368.06" x2="29.80" y2="368.06" stroke="#4a5f8c" stroke-width="0.5"/>
</g>
<text x="34.00" y="368.39" font-size="6.2" fill="#111" textLength="31.60" lengthAdjust="spacingAndGlyphs">PopUpButton</text>
<line x1="18.8" y1="374.6" x2="23" y2="374.6" stroke="#b5b5b5" stroke-width="0.5" stroke-dasharray="0.5,0.5"/>
<g transform="translate(23.4,370.80) scale(1.13) translate(-23.4,-370.80)">
<rect x="23.40" y="371.80" width="7.00" height="4.60" fill="#f7f9fd" stroke="#6f86b4" stroke-width="0.65" rx="1"/>
<line x1="24.00" y1="376.50" x2="29.80" y2="376.50" stroke="#4a5f8c" stroke-width="0.5"/>
</g>
<text x="34.00" y="376.83" font-size="6.2" fill="#111" textLength="43.80" lengthAdjust="spacingAndGlyphs">PopUpMenuButton</text>
<line x1="18.8" y1="383.0375" x2="23" y2="383.0375" stroke="#b5b5b5" stroke-width="0.5" stroke-dasharray="0.5,0.5"/>
<g transform="translate(23.4,379.24) scale(1.13) translate(-23.4,-379.24)">
<rect x="23.20" y="381.44" width="7.60" height="2.80" fill="#f7f7f7" stroke="#444" stroke-width="0.6" rx="0.6"/>
<rect x="23.60" y="381.84" width="2.80" height="2.00" fill="#555"/>
</g>
<text x="34.00" y="385.27" font-size="6.2" fill="#111" textLength="29.20" lengthAdjust="spacingAndGlyphs">ProgressBar</text>
<line x1="18.8" y1="391.475" x2="23" y2="391.475" stroke="#b5b5b5" stroke-width="0.5" stroke-dasharray="0.5,0.5"/>
<g transform="translate(23.4,387.68) scale(1.13) translate(-23.4,-387.68)">
<rect x="23.40" y="387.68" width="7.00" height="6.80" fill="#bcd3f7" stroke="#4d78cf" stroke-width="0.5"/>
<circle cx="26.90" cy="391.07" r="2.20" fill="#fff" stroke="#333" stroke-width="0.5"/>
<circle cx="26.90" cy="391.07" r="1.00" fill="#111"/>
</g>
<text x="34.00" y="393.71" font-size="6.2" fill="#111" textLength="29.60" lengthAdjust="spacingAndGlyphs">RadioButton</text>
<line x1="18.8" y1="399.9125" x2="23" y2="399.9125" stroke="#b5b5b5" stroke-width="0.5" stroke-dasharray="0.5,0.5"/>
<g transform="translate(23.4,396.11) scale(1.13) translate(-23.4,-396.11)">
<rect x="23.40" y="396.11" width="7.00" height="6.80" fill="#cfe0fb" stroke="#4d78cf" stroke-width="0.6"/>
<circle cx="25.20" cy="397.51" r="0.60" fill="#224"/>
<line x1="26.60" y1="397.51" x2="29.40" y2="397.51" stroke="#446" stroke-width="0.5"/>
<circle cx="25.20" cy="399.51" r="0.60" fill="#224"/>
<line x1="26.60" y1="399.51" x2="29.40" y2="399.51" stroke="#446" stroke-width="0.5"/>
<circle cx="25.20" cy="401.51" r="0.60" fill="#224"/>
<line x1="26.60" y1="401.51" x2="29.40" y2="401.51" stroke="#446" stroke-width="0.5"/>
</g>
<text x="34.00" y="402.14" font-size="6.2" fill="#111" textLength="43.60" lengthAdjust="spacingAndGlyphs">RadioButtonGroup</text>
<line x1="18.8" y1="408.35" x2="23" y2="408.35" stroke="#b5b5b5" stroke-width="0.5" stroke-dasharray="0.5,0.5"/>
<g transform="translate(23.4,404.55) scale(1.13) translate(-23.4,-404.55)">
<rect x="23.40" y="404.55" width="7.00" height="6.80" fill="#e9eef8" stroke="#4d6eb0" stroke-width="0.6"/>
<rect x="23.40" y="404.55" width="7.00" height="1.60" fill="#3e62b0"/>
<rect x="24.40" y="407.55" width="1.80" height="1.60" fill="#2c4c90"/>
<rect x="27.40" y="407.55" width="1.80" height="1.60" fill="#2c4c90"/>
<rect x="26.00" y="409.55" width="1.80" height="1.40" fill="#2c4c90"/>
</g>
<text x="34.00" y="410.58" font-size="6.2" fill="#111" textLength="35.20" lengthAdjust="spacingAndGlyphs">RichTextEditor</text>
<line x1="18.8" y1="416.7875" x2="23" y2="416.7875" stroke="#b5b5b5" stroke-width="0.5" stroke-dasharray="0.5,0.5"/>
<g transform="translate(23.4,412.99) scale(1.13) translate(-23.4,-412.99)">
<rect x="23.40" y="412.99" width="7.00" height="6.80" fill="#ececec" stroke="#777" stroke-width="0.5"/>
<line x1="24.40" y1="414.39" x2="29.40" y2="414.39" stroke="#777" stroke-width="0.5"/>
<line x1="24.40" y1="415.79" x2="29.40" y2="415.79" stroke="#777" stroke-width="0.5"/>
<line x1="24.40" y1="417.19" x2="29.40" y2="417.19" stroke="#777" stroke-width="0.5"/>
<line x1="24.40" y1="418.59" x2="29.40" y2="418.59" stroke="#777" stroke-width="0.5"/>
</g>
<text x="34.00" y="419.02" font-size="6.2" fill="#111" textLength="10.60" lengthAdjust="spacingAndGlyphs">Text</text>
<line x1="18.8" y1="425.225" x2="23" y2="425.225" stroke="#b5b5b5" stroke-width="0.5" stroke-dasharray="0.5,0.5"/>
<g transform="translate(23.4,421.43) scale(1.13) translate(-23.4,-421.43)">
<rect x="23.40" y="421.43" width="7.00" height="6.80" fill="#f5f5f5" stroke="#444" stroke-width="0.7"/>
<line x1="25.40" y1="422.23" x2="25.40" y2="427.43" stroke="#335" stroke-width="0.6"/>
<line x1="26.40" y1="423.43" x2="29.40" y2="423.43" stroke="#99a" stroke-width="0.5"/>
<line x1="26.40" y1="424.82" x2="29.40" y2="424.82" stroke="#99a" stroke-width="0.5"/>
<line x1="26.40" y1="426.23" x2="29.40" y2="426.23" stroke="#99a" stroke-width="0.5"/>
</g>
<text x="34.00" y="427.46" font-size="6.2" fill="#111" textLength="21.80" lengthAdjust="spacingAndGlyphs">TextArea</text>
<line x1="18.8" y1="433.6625" x2="23" y2="433.6625" stroke="#b5b5b5" stroke-width="0.5" stroke-dasharray="0.5,0.5"/>
<g transform="translate(23.4,429.86) scale(1.13) translate(-23.4,-429.86)">
<rect x="23.20" y="430.86" width="7.40" height="4.80" fill="#f2f2f2" stroke="#444" stroke-width="0.6"/>
<text x="24.80" y="434.49" font-size="3.4" fill="#223" textLength="3.60" lengthAdjust="spacingAndGlyphs" font-weight="bold">ab</text>
<line x1="29.20" y1="431.66" x2="29.20" y2="434.86" stroke="#223" stroke-width="0.6"/>
</g>
<text x="34.00" y="435.89" font-size="6.2" fill="#111" textLength="22.40" lengthAdjust="spacingAndGlyphs">TextInput</text>
<line x1="0.00" y1="438.60" x2="600.00" y2="438.60" stroke="#f8f6ee" stroke-width="0.6"/>
<rect x="2.40" y="440.20" width="25.20" height="11.80" fill="none" stroke="#d6cfba" stroke-width="0.6" rx="1"/>
<rect x="6.10" y="441.20" width="0.90" height="0.90" fill="#a9a594"/>
<rect x="6.10" y="443.20" width="0.90" height="0.90" fill="#a9a594"/>
<rect x="6.10" y="445.20" width="0.90" height="0.90" fill="#a9a594"/>
<rect x="6.10" y="447.20" width="0.90" height="0.90" fill="#a9a594"/>
<line x1="27.40" y1="440.40" x2="27.40" y2="449.00" stroke="#c9c5b3" stroke-width="0.7"/>
<line x1="28.10" y1="440.40" x2="28.10" y2="449.00" stroke="#fff" stroke-width="0.6"/>
<line x1="481.20" y1="440.40" x2="481.20" y2="449.00" stroke="#c9c5b3" stroke-width="0.7"/>
<line x1="481.90" y1="440.40" x2="481.90" y2="449.00" stroke="#fff" stroke-width="0.6"/>
<rect x="-6.00" y="449.80" width="612.00" height="9.40" fill="#1a5ce6"/>
<line x1="0.00" y1="450.10" x2="600.00" y2="450.10" stroke="#4a8af5" stroke-width="0.7"/>
<rect x="122.40" y="36.20" width="356.20" height="323.40" fill="#f0e8d7" stroke="#aca899" stroke-width="0.6" rx="1.2"/>
<rect x="127.00" y="38.60" width="6.40" height="7.20" fill="#f1f1f1" stroke="#4f4f4f" stroke-width="0.65" rx="0.6"/>
<rect x="127.30" y="41.60" width="0.90" height="3.90" fill="#3a3a3a"/>
<rect x="128.10" y="42.40" width="2.70" height="2.80" fill="#333333"/>
<rect x="131.10" y="40.60" width="1.80" height="4.50" fill="#b0b0b0"/>
<rect x="128.70" y="39.40" width="3.10" height="2.00" fill="#ffffff"/>
<line x1="128.60" y1="41.90" x2="131.40" y2="40.00" stroke="#777" stroke-width="0.45"/>
<text x="135.00" y="44.23" font-size="6.2" fill="#111" textLength="28.40" lengthAdjust="spacingAndGlyphs">Events.mxml</text>
<rect x="178.40" y="38.60" width="6.40" height="7.20" fill="#f1f1f1" stroke="#4f4f4f" stroke-width="0.65" rx="0.6"/>
<rect x="178.70" y="41.60" width="0.90" height="3.90" fill="#3a3a3a"/>
<rect x="179.50" y="42.40" width="2.70" height="2.80" fill="#333333"/>
<rect x="182.50" y="40.60" width="1.80" height="4.50" fill="#b0b0b0"/>
<rect x="180.10" y="39.40" width="3.10" height="2.00" fill="#ffffff"/>
<line x1="180.00" y1="41.90" x2="182.80" y2="40.00" stroke="#777" stroke-width="0.45"/>
<text x="187.00" y="44.23" font-size="6.2" fill="#111" textLength="35.00" lengthAdjust="spacingAndGlyphs">Behavior.mxml</text>
<rect x="236.20" y="38.60" width="6.40" height="7.20" fill="#f1f1f1" stroke="#4f4f4f" stroke-width="0.65" rx="0.6"/>
<rect x="236.50" y="41.60" width="0.90" height="3.90" fill="#3a3a3a"/>
<rect x="237.30" y="42.40" width="2.70" height="2.80" fill="#333333"/>
<rect x="240.30" y="40.60" width="1.80" height="4.50" fill="#b0b0b0"/>
<rect x="237.90" y="39.40" width="3.10" height="2.00" fill="#ffffff"/>
<line x1="237.80" y1="41.90" x2="240.60" y2="40.00" stroke="#777" stroke-width="0.45"/>
<text x="245.00" y="44.23" font-size="6.2" fill="#111" textLength="30.00" lengthAdjust="spacingAndGlyphs">Layout.mxml</text>
<rect x="289.60" y="38.60" width="6.40" height="7.20" fill="#f1f1f1" stroke="#4f4f4f" stroke-width="0.65" rx="0.6"/>
<rect x="289.90" y="41.60" width="0.90" height="3.90" fill="#3a3a3a"/>
<rect x="290.70" y="42.40" width="2.70" height="2.80" fill="#333333"/>
<rect x="293.70" y="40.60" width="1.80" height="4.50" fill="#b0b0b0"/>
<rect x="291.30" y="39.40" width="3.10" height="2.00" fill="#ffffff"/>
<line x1="291.20" y1="41.90" x2="294.00" y2="40.00" stroke="#777" stroke-width="0.45"/>
<text x="299.60" y="44.23" font-size="6.2" fill="#111" textLength="32.40" lengthAdjust="spacingAndGlyphs">Lessons.mxml</text>
<rect x="346.20" y="38.60" width="6.40" height="7.20" fill="#f1f1f1" stroke="#4f4f4f" stroke-width="0.65" rx="0.6"/>
<rect x="346.50" y="41.60" width="0.90" height="3.90" fill="#3a3a3a"/>
<rect x="347.30" y="42.40" width="2.70" height="2.80" fill="#333333"/>
<rect x="350.30" y="40.60" width="1.80" height="4.50" fill="#b0b0b0"/>
<rect x="347.90" y="39.40" width="3.10" height="2.00" fill="#ffffff"/>
<line x1="347.80" y1="41.90" x2="350.60" y2="40.00" stroke="#777" stroke-width="0.45"/>
<text x="354.60" y="44.23" font-size="6.2" fill="#111" textLength="40.80" lengthAdjust="spacingAndGlyphs">ListControl.mxml</text>
<line x1="175.00" y1="37.00" x2="175.00" y2="47.00" stroke="#c9c5b3" stroke-width="0.7"/>
<line x1="233.00" y1="37.00" x2="233.00" y2="47.00" stroke="#c9c5b3" stroke-width="0.7"/>
<line x1="286.40" y1="37.00" x2="286.40" y2="47.00" stroke="#c9c5b3" stroke-width="0.7"/>
<line x1="343.00" y1="37.00" x2="343.00" y2="47.00" stroke="#c9c5b3" stroke-width="0.7"/>
<path d="M406.8,47.6 v-9.4 q0,-1.6 1.6,-1.6 h47.6 q1.6,0 1.6,1.6 v9.4 z" fill="url(#gTab)"/>
<rect x="409.80" y="38.60" width="6.40" height="7.20" fill="#f1f1f1" stroke="#4f4f4f" stroke-width="0.65" rx="0.6"/>
<rect x="410.10" y="41.60" width="0.90" height="3.90" fill="#3a3a3a"/>
<rect x="410.90" y="42.40" width="2.70" height="2.80" fill="#333333"/>
<rect x="413.90" y="40.60" width="1.80" height="4.50" fill="#b0b0b0"/>
<rect x="411.50" y="39.40" width="3.10" height="2.00" fill="#ffffff"/>
<line x1="411.40" y1="41.90" x2="414.20" y2="40.00" stroke="#777" stroke-width="0.45"/>
<text x="417.60" y="44.23" font-size="6.2" fill="#ffffff" textLength="27.80" lengthAdjust="spacingAndGlyphs">*Main.mxml</text>
<line x1="449.60" y1="40.00" x2="453.20" y2="44.00" stroke="#fff" stroke-width="1"/>
<line x1="453.20" y1="40.00" x2="449.60" y2="44.00" stroke="#fff" stroke-width="1"/>
<rect x="462.00" y="38.40" width="5.20" height="2.10" fill="#fff" stroke="#7d796b" stroke-width="0.7" rx="0.6"/>
<rect x="470.50" y="38.40" width="5.20" height="4.80" fill="#fff" stroke="#6f6b5e" stroke-width="0.8" rx="0.5"/>
<line x1="470.50" y1="39.00" x2="475.70" y2="39.00" stroke="#6f6b5e" stroke-width="1.1"/>
<rect x="123.40" y="47.60" width="354.40" height="311.60" fill="none" stroke="#4b8fea" stroke-width="1.5"/>
<line x1="123.00" y1="47.40" x2="478.00" y2="47.40" stroke="#3a84ec" stroke-width="1.2"/>
<rect x="124.20" y="48.20" width="352.80" height="12.80" fill="#f3efe2"/>
<rect x="124.80" y="49.00" width="58.40" height="11.20" fill="#fff" stroke="#b4b2a6" stroke-width="0.7" rx="1.6"/>
<rect x="125.20" y="49.40" width="28.00" height="10.40" fill="#dbd9d1" rx="1.2"/>
<line x1="153.20" y1="49.40" x2="153.20" y2="59.80" stroke="#b4b2a6" stroke-width="0.6"/>
<rect x="126.80" y="51.40" width="6.20" height="7.20" fill="url(#gBtn)" stroke="#5c5c5c" stroke-width="0.7" rx="0.9"/>
<text x="128.00" y="56.71" font-size="4.2" fill="#222" textLength="3.80" lengthAdjust="spacingAndGlyphs" font-weight="bold">‹›</text>
<text x="135.60" y="56.83" font-size="6.2" fill="#111" textLength="15.40" lengthAdjust="spacingAndGlyphs">Source</text>
<rect x="155.60" y="50.80" width="7.00" height="7.20" fill="#cfe0fa" stroke="#4a78d8" stroke-width="0.8"/>
<rect x="157.00" y="52.20" width="3.40" height="3.60" fill="#5b86d8"/>
<path d="M160.2,55 l2.6,3 l-2.6,-0.6z" fill="#f4f4f4" stroke="#555" stroke-width="0.3"/>
<text x="165.60" y="56.83" font-size="6.2" fill="#111" textLength="15.40" lengthAdjust="spacingAndGlyphs">Design</text>
<path d="M193.4,54.8 a3,3 0 1 1 -1,-2.4" fill="none" stroke="#2d6ad8" stroke-width="1.5"/>
<path d="M191.4,50.2 l3,0.4 l-1.2,2.8z" fill="#2d6ad8"/>
<rect x="197.60" y="50.80" width="7.60" height="7.80" fill="#4484ea" stroke="#2a55b0" stroke-width="0.6"/>
<rect x="197.60" y="50.80" width="7.60" height="1.60" fill="#1c3468"/>
<rect x="198.40" y="53.00" width="2.20" height="5.00" fill="#a9c8f6"/>
<line x1="209.00" y1="50.40" x2="209.00" y2="59.40" stroke="#b9b5a4" stroke-width="0.7"/>
<line x1="209.70" y1="50.40" x2="209.70" y2="59.40" stroke="#fff" stroke-width="0.6"/>
<text x="212.40" y="57.09" font-size="6.73" fill="#111" textLength="18.20" lengthAdjust="spacingAndGlyphs" stroke="#111" stroke-width="0.14">ステート:</text>
<rect x="233.00" y="50.00" width="59.60" height="9.60" fill="#fff"/>
<line x1="233.00" y1="59.60" x2="292.60" y2="59.60" stroke="#fbfaf5" stroke-width="0.6"/>
<line x1="292.60" y1="50.00" x2="292.60" y2="59.60" stroke="#fbfaf5" stroke-width="0.6"/>
<line x1="232.70" y1="50.00" x2="292.60" y2="50.00" stroke="#85857c" stroke-width="0.7"/>
<line x1="233.00" y1="50.00" x2="233.00" y2="59.60" stroke="#85857c" stroke-width="0.7"/>
<rect x="285.60" y="50.60" width="6.50" height="8.50" fill="#ece8da" stroke="#8f8c80" stroke-width="0.5"/>
<line x1="285.90" y1="50.90" x2="291.80" y2="50.90" stroke="#fff" stroke-width="0.4"/>
<path d="M287.35,54.00 h3 l-1.5,1.8 z" fill="#111"/>
<text x="234.40" y="57.01" font-size="6.5" fill="#111" textLength="35.60" lengthAdjust="spacingAndGlyphs" stroke="#111" stroke-width="0.14">&lt;ベースステート&gt;</text>
<text x="391.00" y="57.09" font-size="6.73" fill="#111" textLength="26.60" lengthAdjust="spacingAndGlyphs" stroke="#111" stroke-width="0.14">ビューサイズ:</text>
<rect x="421.00" y="50.00" width="54.40" height="9.40" fill="#fff"/>
<line x1="421.00" y1="59.40" x2="475.40" y2="59.40" stroke="#fbfaf5" stroke-width="0.6"/>
<line x1="475.40" y1="50.00" x2="475.40" y2="59.40" stroke="#fbfaf5" stroke-width="0.6"/>
<line x1="420.70" y1="50.00" x2="475.40" y2="50.00" stroke="#85857c" stroke-width="0.7"/>
<line x1="421.00" y1="50.00" x2="421.00" y2="59.40" stroke="#85857c" stroke-width="0.7"/>
<rect x="468.40" y="50.60" width="6.50" height="8.30" fill="#ece8da" stroke="#8f8c80" stroke-width="0.5"/>
<line x1="468.70" y1="50.90" x2="474.60" y2="50.90" stroke="#fff" stroke-width="0.4"/>
<path d="M470.15,53.90 h3 l-1.5,1.8 z" fill="#111"/>
<text x="422.40" y="57.01" font-size="6.5" fill="#111" textLength="43.20" lengthAdjust="spacingAndGlyphs" stroke="#111" stroke-width="0.14">ウィンドウに合わせる</text>
<rect x="124.40" y="60.80" width="352.60" height="282.40" fill="#e1e2e0"/>
<rect x="133.20" y="70.60" width="334.80" height="263.60" fill="#e2d2b9"/>
<rect x="134.20" y="71.60" width="333.80" height="262.40" fill="url(#gCanvas)"/>
<line x1="468.20" y1="71.00" x2="468.20" y2="334.00" stroke="#d9cfbb" stroke-width="0.6" opacity="0.7"/>
<rect x="312.60" y="71.60" width="155.40" height="88.20" fill="#ffffff" opacity="0.06"/>
<rect x="312.60" y="155.60" width="155.40" height="4.20" fill="#b9c9e6" opacity="0.16"/>
<line x1="312.60" y1="160.00" x2="468.00" y2="160.00" stroke="#ffffff" stroke-width="0.6" opacity="0.12"/>
<rect x="142.80" y="85.40" width="166.00" height="156.00" fill="#c3d0d7" rx="1.6" opacity="0.97"/>
<line x1="143.40" y1="241.70" x2="309.40" y2="241.70" stroke="#2f3c45" stroke-width="1.2" opacity="0.8"/>
<line x1="309.30" y1="87.00" x2="309.30" y2="241.80" stroke="#4a5f6b" stroke-width="0.9" opacity="0.5"/>
<rect x="147.40" y="98.80" width="156.60" height="141.60" fill="#ffffff"/>
<text x="146.60" y="93.74" font-size="5.4" fill="#1d2a33" textLength="45.20" lengthAdjust="spacingAndGlyphs" font-weight="bold">Main App Window</text>
<rect x="313.40" y="86.00" width="127.60" height="69.20" fill="#c3d0d7" rx="1.4"/>
<line x1="314.00" y1="155.80" x2="442.00" y2="155.80" stroke="#3f4f58" stroke-width="1.1" opacity="0.75"/>
<rect x="317.60" y="99.00" width="119.00" height="54.20" fill="#ffffff"/>
<text x="316.00" y="93.44" font-size="5.1" fill="#1d2a33" textLength="36.80" lengthAdjust="spacingAndGlyphs" font-weight="bold">Member Login</text>
<text x="322.60" y="109.47" font-size="5.2" fill="#3a5a70" textLength="27.00" lengthAdjust="spacingAndGlyphs">Username</text>
<text x="322.60" y="125.67" font-size="5.2" fill="#3a5a70" textLength="24.40" lengthAdjust="spacingAndGlyphs">Password</text>
<rect x="357.20" y="103.00" width="74.80" height="9.60" fill="#fff" stroke="#9aa6ad" stroke-width="0.8"/>
<rect x="357.20" y="119.20" width="74.80" height="9.40" fill="#fff" stroke="#9aa6ad" stroke-width="0.8"/>
<rect x="401.60" y="140.00" width="26.40" height="9.60" fill="url(#gBtn)" stroke="#9a9a9a" stroke-width="0.8" rx="1"/>
<text x="407.60" y="146.77" font-size="5.2" fill="#1d2a33" textLength="14.00" lengthAdjust="spacingAndGlyphs" font-weight="bold">Login</text>
<rect x="312.80" y="85.60" width="128.80" height="70.00" fill="none" stroke="#3c3c3c" stroke-width="0.7"/>
<circle cx="312.80" cy="85.60" r="1.30" fill="#fff" stroke="#333" stroke-width="0.5"/>
<circle cx="312.80" cy="120.60" r="1.30" fill="#fff" stroke="#333" stroke-width="0.5"/>
<circle cx="312.80" cy="155.60" r="1.30" fill="#fff" stroke="#333" stroke-width="0.5"/>
<circle cx="377.20" cy="85.60" r="1.30" fill="#fff" stroke="#333" stroke-width="0.5"/>
<circle cx="377.20" cy="155.60" r="1.30" fill="#fff" stroke="#333" stroke-width="0.5"/>
<circle cx="441.60" cy="85.60" r="1.30" fill="#fff" stroke="#333" stroke-width="0.5"/>
<circle cx="441.60" cy="120.60" r="1.30" fill="#fff" stroke="#333" stroke-width="0.5"/>
<circle cx="441.60" cy="155.60" r="1.30" fill="#fff" stroke="#333" stroke-width="0.5"/>
<rect x="124.40" y="343.20" width="352.60" height="15.20" fill="#f0e8d7"/>
<text x="125.40" y="349.69" font-size="6.73" fill="#111" textLength="13.00" lengthAdjust="spacingAndGlyphs" stroke="#111" stroke-width="0.14">コード</text>
<rect x="140.80" y="343.40" width="20.40" height="7.80" fill="#fff" stroke="#c9c5b3" stroke-width="0.5"/>
<text x="142.60" y="349.69" font-size="6.73" fill="#111" textLength="17.00" lengthAdjust="spacingAndGlyphs" stroke="#111" stroke-width="0.14">デザイン</text>
<text x="123.80" y="357.43" font-size="6.2" fill="#111" textLength="108.00" lengthAdjust="spacingAndGlyphs">Flex Builder 2.0 Beta 1 will expire in 40 days</text>
<rect x="122.40" y="361.40" width="356.20" height="76.00" fill="#f0e8d7" stroke="#aca899" stroke-width="0.6" rx="1.2"/>
<path d="M122.8,371.8 V363.2 q0,-1.4 1.4,-1.4 H154.0 q1.6,0 1.6,1.6 V369.8 q0,2 2,2 z" fill="url(#gVTab)"/>
<path d="M154.0,361.8 q1.6,0 1.6,1.6 V369.8 q0,2 2,2 H478.20000000000005" fill="none" stroke="#aca899" stroke-width="0.55"/>
<rect x="125.40" y="363.40" width="5.20" height="7.00" fill="#fbe9cf" stroke="#d9a45a" stroke-width="0.5"/>
<circle cx="128.00" cy="365.40" r="1.10" fill="#e8932c"/>
<path d="M126.4,369.6 l1.6,-2.4 l1.6,2.4z" fill="#e8932c"/>
<text x="133.80" y="369.09" font-size="6.73" fill="#111" textLength="10.80" lengthAdjust="spacingAndGlyphs" font-weight="bold" stroke="#111" stroke-width="0.14">問題</text>
<line x1="148.60" y1="364.80" x2="151.80" y2="368.60" stroke="#9b9b9b" stroke-width="0.6"/>
<line x1="151.80" y1="364.80" x2="148.60" y2="368.60" stroke="#9b9b9b" stroke-width="0.6"/>
<line x1="148.60" y1="365.60" x2="151.80" y2="365.60" stroke="#9b9b9b" stroke-width="0.5"/>
<line x1="148.60" y1="367.80" x2="151.80" y2="367.80" stroke="#9b9b9b" stroke-width="0.5"/>
<line x1="432.60" y1="364.40" x2="437.80" y2="369.60" stroke="#aab2bd" stroke-width="1.3"/>
<line x1="437.80" y1="364.40" x2="432.60" y2="369.60" stroke="#aab2bd" stroke-width="1.3"/>
<line x1="443.00" y1="365.00" x2="447.40" y2="365.00" stroke="#7f8da6" stroke-width="0.9"/>
<line x1="443.00" y1="369.40" x2="447.40" y2="369.40" stroke="#7f8da6" stroke-width="0.9"/>
<line x1="442.60" y1="367.20" x2="445.00" y2="367.20" stroke="#7f8da6" stroke-width="0.8"/>
<path d="M445,365.8 h2.6 l1.8,1.4 l-1.8,1.5 h-2.6 z" fill="#e3a45e"/>
<path d="M453.6,364.2 h4.4 l-2.2,2.3 z" fill="#fbf9f2" stroke="#9b9786" stroke-width="0.5"/>
<line x1="123.00" y1="372.80" x2="478.00" y2="372.80" stroke="#d2cbb6" stroke-width="0.7"/>
<rect x="462.40" y="363.60" width="5.20" height="2.10" fill="#fff" stroke="#7d796b" stroke-width="0.7" rx="0.6"/>
<rect x="470.90" y="363.60" width="5.20" height="4.80" fill="#fff" stroke="#6f6b5e" stroke-width="0.8" rx="0.5"/>
<line x1="470.90" y1="364.20" x2="476.10" y2="364.20" stroke="#6f6b5e" stroke-width="1.1"/>
<text x="124.00" y="379.29" font-size="6.73" fill="#111" textLength="59.40" lengthAdjust="spacingAndGlyphs" stroke="#111" stroke-width="0.14">エラー: 0, 警告: 0, 情報: 0</text>
<rect x="123.00" y="380.40" width="354.80" height="6.80" fill="#f0e8d7"/>
<line x1="123.00" y1="387.10" x2="477.80" y2="387.10" stroke="#aaa695" stroke-width="0.8"/>
<line x1="123.00" y1="380.40" x2="477.80" y2="380.40" stroke="#f7f5ee" stroke-width="0.6"/>
<rect x="123.00" y="387.50" width="354.80" height="49.50" fill="#ffffff"/>
<line x1="133.20" y1="380.80" x2="133.20" y2="386.80" stroke="#858172" stroke-width="0.9"/>
<line x1="134.00" y1="380.80" x2="134.00" y2="386.80" stroke="#fff" stroke-width="0.6"/>
<line x1="133.60" y1="387.60" x2="133.60" y2="437.00" stroke="#efece0" stroke-width="0.7"/>
<line x1="301.40" y1="380.80" x2="301.40" y2="386.80" stroke="#858172" stroke-width="0.9"/>
<line x1="302.20" y1="380.80" x2="302.20" y2="386.80" stroke="#fff" stroke-width="0.6"/>
<line x1="301.80" y1="387.60" x2="301.80" y2="437.00" stroke="#efece0" stroke-width="0.7"/>
<line x1="336.80" y1="380.80" x2="336.80" y2="386.80" stroke="#858172" stroke-width="0.9"/>
<line x1="337.60" y1="380.80" x2="337.60" y2="386.80" stroke="#fff" stroke-width="0.6"/>
<line x1="337.20" y1="387.60" x2="337.20" y2="437.00" stroke="#efece0" stroke-width="0.7"/>
<line x1="406.80" y1="380.80" x2="406.80" y2="386.80" stroke="#858172" stroke-width="0.9"/>
<line x1="407.60" y1="380.80" x2="407.60" y2="386.80" stroke="#fff" stroke-width="0.6"/>
<line x1="407.20" y1="387.60" x2="407.20" y2="437.00" stroke="#efece0" stroke-width="0.7"/>
<line x1="435.00" y1="380.80" x2="435.00" y2="386.80" stroke="#858172" stroke-width="0.9"/>
<line x1="435.80" y1="380.80" x2="435.80" y2="386.80" stroke="#fff" stroke-width="0.6"/>
<line x1="435.40" y1="387.60" x2="435.40" y2="437.00" stroke="#efece0" stroke-width="0.7"/>
<text x="135.40" y="386.19" font-size="6.73" fill="#111" textLength="11.00" lengthAdjust="spacingAndGlyphs" stroke="#111" stroke-width="0.14">記述</text>
<text x="304.00" y="386.19" font-size="6.73" fill="#111" textLength="17.40" lengthAdjust="spacingAndGlyphs" stroke="#111" stroke-width="0.14">リソース</text>
<text x="340.00" y="386.19" font-size="6.73" fill="#111" textLength="21.20" lengthAdjust="spacingAndGlyphs" stroke="#111" stroke-width="0.14">フォルダー</text>
<text x="410.00" y="386.19" font-size="6.73" fill="#111" textLength="21.60" lengthAdjust="spacingAndGlyphs" stroke="#111" stroke-width="0.14">ロケーシ...</text>
<line x1="123.00" y1="394.60" x2="477.80" y2="394.60" stroke="#f0ede2" stroke-width="0.7"/>
<line x1="123.00" y1="400.85" x2="477.80" y2="400.85" stroke="#f0ede2" stroke-width="0.7"/>
<line x1="123.00" y1="407.10" x2="477.80" y2="407.10" stroke="#f0ede2" stroke-width="0.7"/>
<line x1="123.00" y1="413.35" x2="477.80" y2="413.35" stroke="#f0ede2" stroke-width="0.7"/>
<line x1="123.00" y1="419.60" x2="477.80" y2="419.60" stroke="#f0ede2" stroke-width="0.7"/>
<line x1="123.00" y1="425.85" x2="477.80" y2="425.85" stroke="#f0ede2" stroke-width="0.7"/>
<line x1="123.00" y1="432.10" x2="477.80" y2="432.10" stroke="#f0ede2" stroke-width="0.7"/>
<rect x="480.40" y="36.20" width="117.00" height="401.20" fill="#f0e8d7" stroke="#aca899" stroke-width="0.6" rx="1.2"/>
<text x="482.40" y="44.29" font-size="6.73" fill="#111" textLength="16.40" lengthAdjust="spacingAndGlyphs" stroke="#111" stroke-width="0.14">ステート</text>
<path d="M500.8,47.2 V38.0 q0,-1.4 1.4,-1.4 H559.4 q1.6,0 1.6,1.6 V45.2 q0,2 2,2 z" fill="url(#gVTab)"/>
<path d="M559.4,36.6 q1.6,0 1.6,1.6 V45.2 q0,2 2,2 H597.0" fill="none" stroke="#aca899" stroke-width="0.55"/>
<line x1="500.80" y1="37.60" x2="500.80" y2="47.20" stroke="#aca899" stroke-width="0.5"/>
<rect x="503.20" y="38.80" width="6.20" height="6.20" fill="#f4f8ff" stroke="#4a6fa8" stroke-width="0.7"/>
<line x1="503.20" y1="40.40" x2="509.40" y2="40.40" stroke="#4a6fa8" stroke-width="0.6"/>
<text x="512.00" y="44.29" font-size="6.73" fill="#111" textLength="37.60" lengthAdjust="spacingAndGlyphs" stroke="#111" stroke-width="0.14">MXML プロパティ</text>
<line x1="552.80" y1="40.00" x2="556.40" y2="43.80" stroke="#9b9b9b" stroke-width="0.6"/>
<line x1="556.40" y1="40.00" x2="552.80" y2="43.80" stroke="#9b9b9b" stroke-width="0.6"/>
<line x1="552.80" y1="40.80" x2="556.40" y2="40.80" stroke="#9b9b9b" stroke-width="0.5"/>
<line x1="552.80" y1="43.00" x2="556.40" y2="43.00" stroke="#9b9b9b" stroke-width="0.5"/>
<rect x="581.20" y="38.50" width="5.20" height="2.10" fill="#fff" stroke="#7d796b" stroke-width="0.7" rx="0.6"/>
<rect x="589.70" y="38.50" width="5.20" height="4.80" fill="#fff" stroke="#6f6b5e" stroke-width="0.8" rx="0.5"/>
<line x1="589.70" y1="39.10" x2="594.90" y2="39.10" stroke="#6f6b5e" stroke-width="1.1"/>
<line x1="480.90" y1="47.50" x2="596.90" y2="47.50" stroke="#d6d2c0" stroke-width="0.5"/>
<line x1="481.00" y1="59.50" x2="596.80" y2="59.50" stroke="#d9d3bf" stroke-width="0.6"/>
<rect x="556.00" y="48.80" width="9.00" height="9.80" fill="#ffffff" stroke="#e9e4d6" stroke-width="0.5"/>
<rect x="558.00" y="50.60" width="5.20" height="1.70" fill="#a3bcde" stroke="#7d9cc8" stroke-width="0.4"/>
<rect x="558.00" y="53.00" width="5.20" height="1.70" fill="#a3bcde" stroke="#7d9cc8" stroke-width="0.4"/>
<rect x="558.00" y="55.40" width="5.20" height="1.70" fill="#a3bcde" stroke="#7d9cc8" stroke-width="0.4"/>
<line x1="569.80" y1="50.50" x2="574.60" y2="50.50" stroke="#7b818a" stroke-width="0.85"/>
<line x1="569.80" y1="52.50" x2="574.60" y2="52.50" stroke="#7b818a" stroke-width="0.85"/>
<line x1="569.80" y1="54.50" x2="574.60" y2="54.50" stroke="#7b818a" stroke-width="0.85"/>
<line x1="569.80" y1="56.50" x2="574.60" y2="56.50" stroke="#7b818a" stroke-width="0.85"/>
<path d="M567,49.6 l2,1 l-2,1z" fill="#3a6fd0"/>
<path d="M567,53.6 l2,1 l-2,1z" fill="#3a6fd0"/>
<text x="578.00" y="53.98" font-size="4.4" fill="#222" textLength="3.60" lengthAdjust="spacingAndGlyphs" font-weight="bold">A</text>
<text x="582.60" y="57.78" font-size="4.4" fill="#222" textLength="3.00" lengthAdjust="spacingAndGlyphs" font-weight="bold">z</text>
<line x1="581.60" y1="52.40" x2="581.60" y2="57.20" stroke="#2f66c8" stroke-width="0.9"/>
<path d="M580.4,56 h2.4 l-1.2,1.6z" fill="#2f66c8"/>
<path d="M590.2,50.6 h4.2 l-2.1,2.2 z" fill="#fbf9f2" stroke="#9b9786" stroke-width="0.5"/>
<rect x="484.60" y="62.60" width="6.40" height="6.80" fill="#e4ecfb" stroke="#3f66b5" stroke-width="0.7"/>
<rect x="485.80" y="63.80" width="1.30" height="1.20" fill="#3f66b5"/>
<rect x="488.40" y="63.80" width="1.30" height="1.20" fill="#3f66b5"/>
<rect x="487.10" y="65.40" width="1.30" height="1.20" fill="#3f66b5"/>
<rect x="485.80" y="67.00" width="1.30" height="1.20" fill="#3f66b5"/>
<rect x="488.40" y="67.00" width="1.30" height="1.20" fill="#3f66b5"/>
<text x="494.40" y="68.63" font-size="6.2" fill="#111" textLength="31.20" lengthAdjust="spacingAndGlyphs">ns1:LoginBox</text>
<rect x="484.20" y="73.20" width="110.40" height="7.20" fill="#d7d3c7"/>
<line x1="484.20" y1="73.30" x2="594.60" y2="73.30" stroke="#6b675a" stroke-width="1.0"/>
<path d="M486.2,76.10000000000001 h3.4 l-1.7,2.2 z" fill="#111"/>
<text x="492.40" y="79.39" font-size="6.73" fill="#111" textLength="10.20" lengthAdjust="spacingAndGlyphs" stroke="#111" stroke-width="0.14">一般</text>
<text x="487.60" y="91.03" font-size="6.2" fill="#111" textLength="5.40" lengthAdjust="spacingAndGlyphs">Id:</text>
<rect x="495.00" y="85.00" width="68.80" height="7.60" fill="#fff"/>
<line x1="495.00" y1="92.60" x2="563.80" y2="92.60" stroke="#fbfaf5" stroke-width="0.6"/>
<line x1="563.80" y1="85.00" x2="563.80" y2="92.60" stroke="#fbfaf5" stroke-width="0.6"/>
<line x1="494.70" y1="85.00" x2="563.80" y2="85.00" stroke="#85857c" stroke-width="0.7"/>
<line x1="495.00" y1="85.00" x2="495.00" y2="92.60" stroke="#85857c" stroke-width="0.7"/>
<rect x="484.20" y="97.00" width="110.40" height="6.80" fill="#d7d3c7"/>
<line x1="484.20" y1="97.10" x2="594.60" y2="97.10" stroke="#6b675a" stroke-width="1.0"/>
<path d="M486.2,99.7 h3.4 l-1.7,2.2 z" fill="#111"/>
<text x="492.40" y="102.99" font-size="6.73" fill="#111" textLength="17.00" lengthAdjust="spacingAndGlyphs" stroke="#111" stroke-width="0.14">スタイル</text>
<text x="488.00" y="113.29" font-size="6.73" fill="#111" textLength="18.60" lengthAdjust="spacingAndGlyphs" stroke="#111" stroke-width="0.14">スタイル:</text>
<rect x="508.60" y="107.00" width="79.60" height="8.20" fill="#fff"/>
<line x1="508.60" y1="115.20" x2="588.20" y2="115.20" stroke="#fbfaf5" stroke-width="0.6"/>
<line x1="588.20" y1="107.00" x2="588.20" y2="115.20" stroke="#fbfaf5" stroke-width="0.6"/>
<line x1="508.30" y1="107.00" x2="588.20" y2="107.00" stroke="#85857c" stroke-width="0.7"/>
<line x1="508.60" y1="107.00" x2="508.60" y2="115.20" stroke="#85857c" stroke-width="0.7"/>
<rect x="581.20" y="107.60" width="6.50" height="7.10" fill="#ece8da" stroke="#8f8c80" stroke-width="0.5"/>
<line x1="581.50" y1="107.90" x2="587.40" y2="107.90" stroke="#fff" stroke-width="0.4"/>
<path d="M582.95,110.30 h3 l-1.5,1.8 z" fill="#111"/>
<rect x="509.60" y="108.20" width="32.40" height="5.80" fill="#2f63c8"/>
<text x="510.20" y="113.23" font-size="6.26" fill="#ffffff" textLength="31.20" lengthAdjust="spacingAndGlyphs" stroke="#ffffff" stroke-width="0.14">複数選択/混在</text>
<line x1="488.40" y1="119.40" x2="589.00" y2="119.40" stroke="#b3ae9b" stroke-width="0.7"/>
<line x1="488.40" y1="120.00" x2="589.00" y2="120.00" stroke="#fff" stroke-width="0.5"/>
<text x="489.60" y="128.66" font-size="7.4" fill="#111" textLength="6.00" lengthAdjust="spacingAndGlyphs" font-weight="bold">A</text>
<rect x="499.40" y="122.00" width="88.80" height="7.80" fill="#fff"/>
<line x1="499.40" y1="129.80" x2="588.20" y2="129.80" stroke="#fbfaf5" stroke-width="0.6"/>
<line x1="588.20" y1="122.00" x2="588.20" y2="129.80" stroke="#fbfaf5" stroke-width="0.6"/>
<line x1="499.10" y1="122.00" x2="588.20" y2="122.00" stroke="#85857c" stroke-width="0.7"/>
<line x1="499.40" y1="122.00" x2="499.40" y2="129.80" stroke="#85857c" stroke-width="0.7"/>
<rect x="581.20" y="122.60" width="6.50" height="6.70" fill="#ece8da" stroke="#8f8c80" stroke-width="0.5"/>
<line x1="581.50" y1="122.90" x2="587.40" y2="122.90" stroke="#fff" stroke-width="0.4"/>
<path d="M582.95,125.10 h3 l-1.5,1.8 z" fill="#111"/>
<rect x="499.40" y="133.40" width="23.80" height="7.60" fill="#fff"/>
<line x1="499.40" y1="141.00" x2="523.20" y2="141.00" stroke="#fbfaf5" stroke-width="0.6"/>
<line x1="523.20" y1="133.40" x2="523.20" y2="141.00" stroke="#fbfaf5" stroke-width="0.6"/>
<line x1="499.10" y1="133.40" x2="523.20" y2="133.40" stroke="#85857c" stroke-width="0.7"/>
<line x1="499.40" y1="133.40" x2="499.40" y2="141.00" stroke="#85857c" stroke-width="0.7"/>
<rect x="516.20" y="134.00" width="6.50" height="6.50" fill="#ece8da" stroke="#8f8c80" stroke-width="0.5"/>
<line x1="516.50" y1="134.30" x2="522.40" y2="134.30" stroke="#fff" stroke-width="0.4"/>
<path d="M517.95,136.40 h3 l-1.5,1.8 z" fill="#111"/>
<rect x="554.20" y="133.40" width="26.60" height="7.60" fill="#fff"/>
<line x1="554.20" y1="141.00" x2="580.80" y2="141.00" stroke="#fbfaf5" stroke-width="0.6"/>
<line x1="580.80" y1="133.40" x2="580.80" y2="141.00" stroke="#fbfaf5" stroke-width="0.6"/>
<line x1="553.90" y1="133.40" x2="580.80" y2="133.40" stroke="#85857c" stroke-width="0.7"/>
<line x1="554.20" y1="133.40" x2="554.20" y2="141.00" stroke="#85857c" stroke-width="0.7"/>
<rect x="581.60" y="133.40" width="7.40" height="7.60" fill="#f0e8d7" stroke="#cfccbe" stroke-width="0.6"/>
<rect x="500.00" y="144.20" width="6.60" height="7.20" fill="#f3efe2" stroke="#a9a594" stroke-width="0.5"/>
<text x="501.40" y="150.03" font-size="6.2" fill="#000" textLength="3.80" lengthAdjust="spacingAndGlyphs" font-weight="bold">B</text>
<rect x="507.60" y="144.20" width="6.60" height="7.20" fill="#f3efe2" stroke="#a9a594" stroke-width="0.5"/>
<text x="509.4" y="149.9" font-size="5.8" font-weight="bold" font-style="italic" fill="#000">I</text>
<rect x="555.00" y="144.20" width="8.00" height="7.20" fill="#e3e0d3" stroke="#bdb9a8" stroke-width="0.5"/>
<line x1="556.60" y1="145.60" x2="561.20" y2="145.60" stroke="#555" stroke-width="0.7"/>
<line x1="556.60" y1="147.10" x2="559.60" y2="147.10" stroke="#555" stroke-width="0.7"/>
<line x1="556.60" y1="148.60" x2="561.20" y2="148.60" stroke="#555" stroke-width="0.7"/>
<line x1="556.60" y1="150.10" x2="559.60" y2="150.10" stroke="#555" stroke-width="0.7"/>
<rect x="563.50" y="144.20" width="8.00" height="7.20" fill="#e3e0d3" stroke="#bdb9a8" stroke-width="0.5"/>
<line x1="565.20" y1="145.60" x2="569.80" y2="145.60" stroke="#555" stroke-width="0.7"/>
<line x1="566.00" y1="147.10" x2="569.00" y2="147.10" stroke="#555" stroke-width="0.7"/>
<line x1="565.20" y1="148.60" x2="569.80" y2="148.60" stroke="#555" stroke-width="0.7"/>
<line x1="566.00" y1="150.10" x2="569.00" y2="150.10" stroke="#555" stroke-width="0.7"/>
<rect x="572.00" y="144.20" width="8.00" height="7.20" fill="#e3e0d3" stroke="#bdb9a8" stroke-width="0.5"/>
<line x1="573.80" y1="145.60" x2="578.40" y2="145.60" stroke="#555" stroke-width="0.7"/>
<line x1="575.40" y1="147.10" x2="578.40" y2="147.10" stroke="#555" stroke-width="0.7"/>
<line x1="573.80" y1="148.60" x2="578.40" y2="148.60" stroke="#555" stroke-width="0.7"/>
<line x1="575.40" y1="150.10" x2="578.40" y2="150.10" stroke="#555" stroke-width="0.7"/>
<line x1="488.40" y1="154.40" x2="589.00" y2="154.40" stroke="#b3ae9b" stroke-width="0.7"/>
<line x1="488.40" y1="155.00" x2="589.00" y2="155.00" stroke="#fff" stroke-width="0.5"/>
<rect x="490.00" y="158.00" width="5.40" height="6.40" fill="#f6f6f6" stroke="#444" stroke-width="0.7"/>
<line x1="491.40" y1="160.00" x2="491.40" y2="162.40" stroke="#444" stroke-width="0.6"/>
<rect x="499.40" y="157.60" width="35.00" height="7.20" fill="#fff"/>
<line x1="499.40" y1="164.80" x2="534.40" y2="164.80" stroke="#fbfaf5" stroke-width="0.6"/>
<line x1="534.40" y1="157.60" x2="534.40" y2="164.80" stroke="#fbfaf5" stroke-width="0.6"/>
<line x1="499.10" y1="157.60" x2="534.40" y2="157.60" stroke="#85857c" stroke-width="0.7"/>
<line x1="499.40" y1="157.60" x2="499.40" y2="164.80" stroke="#85857c" stroke-width="0.7"/>
<rect x="527.40" y="158.20" width="6.50" height="6.10" fill="#ece8da" stroke="#8f8c80" stroke-width="0.5"/>
<line x1="527.70" y1="158.50" x2="533.60" y2="158.50" stroke="#fff" stroke-width="0.4"/>
<path d="M529.15,160.40 h3 l-1.5,1.8 z" fill="#111"/>
<path d="M540.4,164.4 v-2.4 q0,-3 3,-3 h1.8" fill="none" stroke="#555" stroke-width="0.8"/>
<rect x="548.40" y="157.60" width="23.20" height="7.20" fill="#fff"/>
<line x1="548.40" y1="164.80" x2="571.60" y2="164.80" stroke="#fbfaf5" stroke-width="0.6"/>
<line x1="571.60" y1="157.60" x2="571.60" y2="164.80" stroke="#fbfaf5" stroke-width="0.6"/>
<line x1="548.10" y1="157.60" x2="571.60" y2="157.60" stroke="#85857c" stroke-width="0.7"/>
<line x1="548.40" y1="157.60" x2="548.40" y2="164.80" stroke="#85857c" stroke-width="0.7"/>
<rect x="564.60" y="158.20" width="6.50" height="6.10" fill="#ece8da" stroke="#8f8c80" stroke-width="0.5"/>
<line x1="564.90" y1="158.50" x2="570.80" y2="158.50" stroke="#fff" stroke-width="0.4"/>
<path d="M566.35,160.40 h3 l-1.5,1.8 z" fill="#111"/>
<line x1="490.60" y1="174.60" x2="494.80" y2="169.60" stroke="#333" stroke-width="1.2"/>
<rect x="499.40" y="168.40" width="26.40" height="7.20" fill="#f0e8d7"/>
<line x1="499.40" y1="175.60" x2="525.80" y2="175.60" stroke="#fbfaf5" stroke-width="0.6"/>
<line x1="525.80" y1="168.40" x2="525.80" y2="175.60" stroke="#fbfaf5" stroke-width="0.6"/>
<line x1="499.10" y1="168.40" x2="525.80" y2="168.40" stroke="#b5b1a1" stroke-width="0.7"/>
<line x1="499.40" y1="168.40" x2="499.40" y2="175.60" stroke="#b5b1a1" stroke-width="0.7"/>
<rect x="527.40" y="168.40" width="7.60" height="7.20" fill="#f0e8d7" stroke="#cfccbe" stroke-width="0.6"/>
<line x1="540.60" y1="174.60" x2="545.00" y2="169.40" stroke="#444" stroke-width="0.7"/>
<rect x="548.40" y="168.40" width="23.20" height="7.20" fill="#f0e8d7"/>
<line x1="548.40" y1="175.60" x2="571.60" y2="175.60" stroke="#fbfaf5" stroke-width="0.6"/>
<line x1="571.60" y1="168.40" x2="571.60" y2="175.60" stroke="#fbfaf5" stroke-width="0.6"/>
<line x1="548.10" y1="168.40" x2="571.60" y2="168.40" stroke="#bab6a6" stroke-width="0.7"/>
<line x1="548.40" y1="168.40" x2="548.40" y2="175.60" stroke="#bab6a6" stroke-width="0.7"/>
<rect x="564.60" y="169.00" width="6.50" height="6.10" fill="#f0e8d7" stroke="#d0cdbf" stroke-width="0.5"/>
<line x1="564.90" y1="169.30" x2="570.80" y2="169.30" stroke="#fff" stroke-width="0.4"/>
<path d="M566.35,171.20 h3 l-1.5,1.8 z" fill="#bbb"/>
<path d="M490.4,185.8 l1.4,-3.6 h2.6 l1,3.6 z" fill="#333"/>
<circle cx="493.20" cy="182.00" r="1.00" fill="#555"/>
<rect x="499.40" y="179.80" width="26.40" height="7.20" fill="#fff"/>
<line x1="499.40" y1="187.00" x2="525.80" y2="187.00" stroke="#fbfaf5" stroke-width="0.6"/>
<line x1="525.80" y1="179.80" x2="525.80" y2="187.00" stroke="#fbfaf5" stroke-width="0.6"/>
<line x1="499.10" y1="179.80" x2="525.80" y2="179.80" stroke="#85857c" stroke-width="0.7"/>
<line x1="499.40" y1="179.80" x2="499.40" y2="187.00" stroke="#85857c" stroke-width="0.7"/>
<rect x="527.40" y="179.80" width="7.60" height="7.20" fill="#f0e8d7" stroke="#cfccbe" stroke-width="0.6"/>
<line x1="488.40" y1="190.80" x2="589.00" y2="190.80" stroke="#b3ae9b" stroke-width="0.7"/>
<line x1="488.40" y1="191.40" x2="589.00" y2="191.40" stroke="#fff" stroke-width="0.5"/>
<text x="503.40" y="200.49" font-size="6.73" fill="#111" textLength="24.00" lengthAdjust="spacingAndGlyphs" stroke="#111" stroke-width="0.14">テーマの色:</text>
<rect x="529.40" y="193.80" width="39.20" height="8.60" fill="#fff"/>
<line x1="529.40" y1="202.40" x2="568.60" y2="202.40" stroke="#fbfaf5" stroke-width="0.6"/>
<line x1="568.60" y1="193.80" x2="568.60" y2="202.40" stroke="#fbfaf5" stroke-width="0.6"/>
<line x1="529.10" y1="193.80" x2="568.60" y2="193.80" stroke="#85857c" stroke-width="0.7"/>
<line x1="529.40" y1="193.80" x2="529.40" y2="202.40" stroke="#85857c" stroke-width="0.7"/>
<rect x="561.60" y="194.40" width="6.50" height="7.50" fill="#ece8da" stroke="#8f8c80" stroke-width="0.5"/>
<line x1="561.90" y1="194.70" x2="567.80" y2="194.70" stroke="#fff" stroke-width="0.4"/>
<path d="M563.35,197.30 h3 l-1.5,1.8 z" fill="#111"/>
<text x="498.60" y="212.49" font-size="6.73" fill="#111" textLength="28.80" lengthAdjust="spacingAndGlyphs" stroke="#111" stroke-width="0.14">無効時の色:</text>
<rect x="529.40" y="206.00" width="25.60" height="8.00" fill="#fff"/>
<line x1="529.40" y1="214.00" x2="555.00" y2="214.00" stroke="#fbfaf5" stroke-width="0.6"/>
<line x1="555.00" y1="206.00" x2="555.00" y2="214.00" stroke="#fbfaf5" stroke-width="0.6"/>
<line x1="529.10" y1="206.00" x2="555.00" y2="206.00" stroke="#85857c" stroke-width="0.7"/>
<line x1="529.40" y1="206.00" x2="529.40" y2="214.00" stroke="#85857c" stroke-width="0.7"/>
<rect x="556.80" y="206.00" width="8.20" height="8.00" fill="#f0e8d7" stroke="#cfccbe" stroke-width="0.6"/>
<text x="506.60" y="223.29" font-size="6.73" fill="#111" textLength="20.80" lengthAdjust="spacingAndGlyphs" stroke="#111" stroke-width="0.14">塗りの色:</text>
<rect x="529.40" y="217.00" width="25.60" height="7.80" fill="#fff"/>
<line x1="529.40" y1="224.80" x2="555.00" y2="224.80" stroke="#fbfaf5" stroke-width="0.6"/>
<line x1="555.00" y1="217.00" x2="555.00" y2="224.80" stroke="#fbfaf5" stroke-width="0.6"/>
<line x1="529.10" y1="217.00" x2="555.00" y2="217.00" stroke="#85857c" stroke-width="0.7"/>
<line x1="529.40" y1="217.00" x2="529.40" y2="224.80" stroke="#85857c" stroke-width="0.7"/>
<rect x="556.80" y="217.00" width="8.20" height="7.80" fill="#f0e8d7" stroke="#cfccbe" stroke-width="0.6"/>
<rect x="529.40" y="227.80" width="25.60" height="7.40" fill="#f0e8d7"/>
<line x1="529.40" y1="235.20" x2="555.00" y2="235.20" stroke="#fbfaf5" stroke-width="0.6"/>
<line x1="555.00" y1="227.80" x2="555.00" y2="235.20" stroke="#fbfaf5" stroke-width="0.6"/>
<line x1="529.10" y1="227.80" x2="555.00" y2="227.80" stroke="#b5b1a1" stroke-width="0.7"/>
<line x1="529.40" y1="227.80" x2="529.40" y2="235.20" stroke="#b5b1a1" stroke-width="0.7"/>
<rect x="556.80" y="227.80" width="8.20" height="7.40" fill="#f0e8d7" stroke="#cfccbe" stroke-width="0.6"/>
<rect x="484.20" y="239.60" width="110.40" height="7.20" fill="#d7d3c7"/>
<line x1="484.20" y1="239.70" x2="594.60" y2="239.70" stroke="#6b675a" stroke-width="1.0"/>
<path d="M486.2,242.5 h3.4 l-1.7,2.2 z" fill="#111"/>
<text x="492.40" y="245.79" font-size="6.73" fill="#111" textLength="21.00" lengthAdjust="spacingAndGlyphs" stroke="#111" stroke-width="0.14">レイアウト</text>
<text x="489.00" y="256.69" font-size="6.73" fill="#111" textLength="21.20" lengthAdjust="spacingAndGlyphs" stroke="#111" stroke-width="0.14">レイアウト:</text>
<rect x="512.40" y="250.40" width="32.80" height="7.80" fill="#fff"/>
<line x1="512.40" y1="258.20" x2="545.20" y2="258.20" stroke="#fbfaf5" stroke-width="0.6"/>
<line x1="545.20" y1="250.40" x2="545.20" y2="258.20" stroke="#fbfaf5" stroke-width="0.6"/>
<line x1="512.10" y1="250.40" x2="545.20" y2="250.40" stroke="#85857c" stroke-width="0.7"/>
<line x1="512.40" y1="250.40" x2="512.40" y2="258.20" stroke="#85857c" stroke-width="0.7"/>
<rect x="538.20" y="251.00" width="6.50" height="6.70" fill="#ece8da" stroke="#8f8c80" stroke-width="0.5"/>
<line x1="538.50" y1="251.30" x2="544.40" y2="251.30" stroke="#fff" stroke-width="0.4"/>
<path d="M539.95,253.50 h3 l-1.5,1.8 z" fill="#111"/>
<line x1="488.40" y1="261.00" x2="589.00" y2="261.00" stroke="#b3ae9b" stroke-width="0.7"/>
<line x1="488.40" y1="261.60" x2="589.00" y2="261.60" stroke="#fff" stroke-width="0.5"/>
<text x="489.00" y="270.69" font-size="6.73" fill="#111" textLength="6.00" lengthAdjust="spacingAndGlyphs" stroke="#111" stroke-width="0.14">幅:</text>
<rect x="497.00" y="264.40" width="28.00" height="7.60" fill="#fff"/>
<line x1="497.00" y1="272.00" x2="525.00" y2="272.00" stroke="#fbfaf5" stroke-width="0.6"/>
<line x1="525.00" y1="264.40" x2="525.00" y2="272.00" stroke="#fbfaf5" stroke-width="0.6"/>
<line x1="496.70" y1="264.40" x2="525.00" y2="264.40" stroke="#85857c" stroke-width="0.7"/>
<line x1="497.00" y1="264.40" x2="497.00" y2="272.00" stroke="#85857c" stroke-width="0.7"/>
<text x="527.00" y="270.69" font-size="6.73" fill="#111" textLength="11.00" lengthAdjust="spacingAndGlyphs" stroke="#111" stroke-width="0.14">高さ:</text>
<rect x="540.00" y="264.40" width="28.60" height="7.60" fill="#fff"/>
<line x1="540.00" y1="272.00" x2="568.60" y2="272.00" stroke="#fbfaf5" stroke-width="0.6"/>
<line x1="568.60" y1="264.40" x2="568.60" y2="272.00" stroke="#fbfaf5" stroke-width="0.6"/>
<line x1="539.70" y1="264.40" x2="568.60" y2="264.40" stroke="#85857c" stroke-width="0.7"/>
<line x1="540.00" y1="264.40" x2="540.00" y2="272.00" stroke="#85857c" stroke-width="0.7"/>
<text x="491.00" y="281.76" font-size="6.0" fill="#111" textLength="4.00" lengthAdjust="spacingAndGlyphs">X:</text>
<rect x="497.00" y="275.80" width="28.00" height="7.40" fill="#fff"/>
<line x1="497.00" y1="283.20" x2="525.00" y2="283.20" stroke="#fbfaf5" stroke-width="0.6"/>
<line x1="525.00" y1="275.80" x2="525.00" y2="283.20" stroke="#fbfaf5" stroke-width="0.6"/>
<line x1="496.70" y1="275.80" x2="525.00" y2="275.80" stroke="#85857c" stroke-width="0.7"/>
<line x1="497.00" y1="275.80" x2="497.00" y2="283.20" stroke="#85857c" stroke-width="0.7"/>
<text x="498.20" y="281.76" font-size="6.0" fill="#111" textLength="8.20" lengthAdjust="spacingAndGlyphs">382</text>
<text x="534.00" y="281.76" font-size="6.0" fill="#111" textLength="4.00" lengthAdjust="spacingAndGlyphs">Y:</text>
<rect x="540.00" y="275.80" width="28.60" height="7.40" fill="#fff"/>
<line x1="540.00" y1="283.20" x2="568.60" y2="283.20" stroke="#fbfaf5" stroke-width="0.6"/>
<line x1="568.60" y1="275.80" x2="568.60" y2="283.20" stroke="#fbfaf5" stroke-width="0.6"/>
<line x1="539.70" y1="275.80" x2="568.60" y2="275.80" stroke="#85857c" stroke-width="0.7"/>
<line x1="540.00" y1="275.80" x2="540.00" y2="283.20" stroke="#85857c" stroke-width="0.7"/>
<text x="541.20" y="281.76" font-size="6.0" fill="#111" textLength="5.40" lengthAdjust="spacingAndGlyphs">30</text>
<text x="489.00" y="290.83" font-size="6.2" fill="#111" textLength="19.80" lengthAdjust="spacingAndGlyphs">Anchors:</text>
<rect x="507.00" y="297.20" width="5.40" height="5.40" fill="#fff"/>
<line x1="507.00" y1="302.60" x2="512.40" y2="302.60" stroke="#f4f2ea" stroke-width="0.6"/>
<line x1="512.40" y1="297.20" x2="512.40" y2="302.60" stroke="#f4f2ea" stroke-width="0.6"/>
<line x1="506.70" y1="297.20" x2="512.40" y2="297.20" stroke="#7d7d75" stroke-width="0.7"/>
<line x1="507.00" y1="297.20" x2="507.00" y2="302.60" stroke="#7d7d75" stroke-width="0.7"/>
<rect x="532.80" y="297.20" width="5.40" height="5.40" fill="#fff"/>
<line x1="532.80" y1="302.60" x2="538.20" y2="302.60" stroke="#f4f2ea" stroke-width="0.6"/>
<line x1="538.20" y1="297.20" x2="538.20" y2="302.60" stroke="#f4f2ea" stroke-width="0.6"/>
<line x1="532.50" y1="297.20" x2="538.20" y2="297.20" stroke="#7d7d75" stroke-width="0.7"/>
<line x1="532.80" y1="297.20" x2="532.80" y2="302.60" stroke="#7d7d75" stroke-width="0.7"/>
<rect x="558.80" y="297.20" width="5.40" height="5.40" fill="#fff"/>
<line x1="558.80" y1="302.60" x2="564.20" y2="302.60" stroke="#f4f2ea" stroke-width="0.6"/>
<line x1="564.20" y1="297.20" x2="564.20" y2="302.60" stroke="#f4f2ea" stroke-width="0.6"/>
<line x1="558.50" y1="297.20" x2="564.20" y2="297.20" stroke="#7d7d75" stroke-width="0.7"/>
<line x1="558.80" y1="297.20" x2="558.80" y2="302.60" stroke="#7d7d75" stroke-width="0.7"/>
<rect x="491.60" y="313.00" width="5.40" height="5.40" fill="#fff"/>
<line x1="491.60" y1="318.40" x2="497.00" y2="318.40" stroke="#f4f2ea" stroke-width="0.6"/>
<line x1="497.00" y1="313.00" x2="497.00" y2="318.40" stroke="#f4f2ea" stroke-width="0.6"/>
<line x1="491.30" y1="313.00" x2="497.00" y2="313.00" stroke="#7d7d75" stroke-width="0.7"/>
<line x1="491.60" y1="313.00" x2="491.60" y2="318.40" stroke="#7d7d75" stroke-width="0.7"/>
<rect x="491.60" y="326.60" width="5.40" height="5.40" fill="#fff"/>
<line x1="491.60" y1="332.00" x2="497.00" y2="332.00" stroke="#f4f2ea" stroke-width="0.6"/>
<line x1="497.00" y1="326.60" x2="497.00" y2="332.00" stroke="#f4f2ea" stroke-width="0.6"/>
<line x1="491.30" y1="326.60" x2="497.00" y2="326.60" stroke="#7d7d75" stroke-width="0.7"/>
<line x1="491.60" y1="326.60" x2="491.60" y2="332.00" stroke="#7d7d75" stroke-width="0.7"/>
<rect x="491.60" y="341.00" width="5.40" height="5.40" fill="#fff"/>
<line x1="491.60" y1="346.40" x2="497.00" y2="346.40" stroke="#f4f2ea" stroke-width="0.6"/>
<line x1="497.00" y1="341.00" x2="497.00" y2="346.40" stroke="#f4f2ea" stroke-width="0.6"/>
<line x1="491.30" y1="341.00" x2="497.00" y2="341.00" stroke="#7d7d75" stroke-width="0.7"/>
<line x1="491.60" y1="341.00" x2="491.60" y2="346.40" stroke="#7d7d75" stroke-width="0.7"/>
<rect x="500.00" y="305.40" width="73.00" height="49.00" fill="#ffffff" stroke="#6f6f6f" stroke-width="0.8"/>
<rect x="507.80" y="313.00" width="31.80" height="28.60" fill="#ffffff" stroke="#b0b8bd" stroke-width="0.6" rx="1.6"/>
<path d="M507.8,321.8 v-7.2 q0,-1.6 1.6,-1.6 h28.6 q1.6,0 1.6,1.6 v7.2 z" fill="#b3c1ca"/>
<line x1="508.60" y1="342.20" x2="540.20" y2="342.20" stroke="#4a555c" stroke-width="1.1" opacity="0.85"/>
<line x1="540.10" y1="315.00" x2="540.10" y2="342.00" stroke="#5f6c74" stroke-width="0.8" opacity="0.5"/>
</g>
</svg>
</body></html>
